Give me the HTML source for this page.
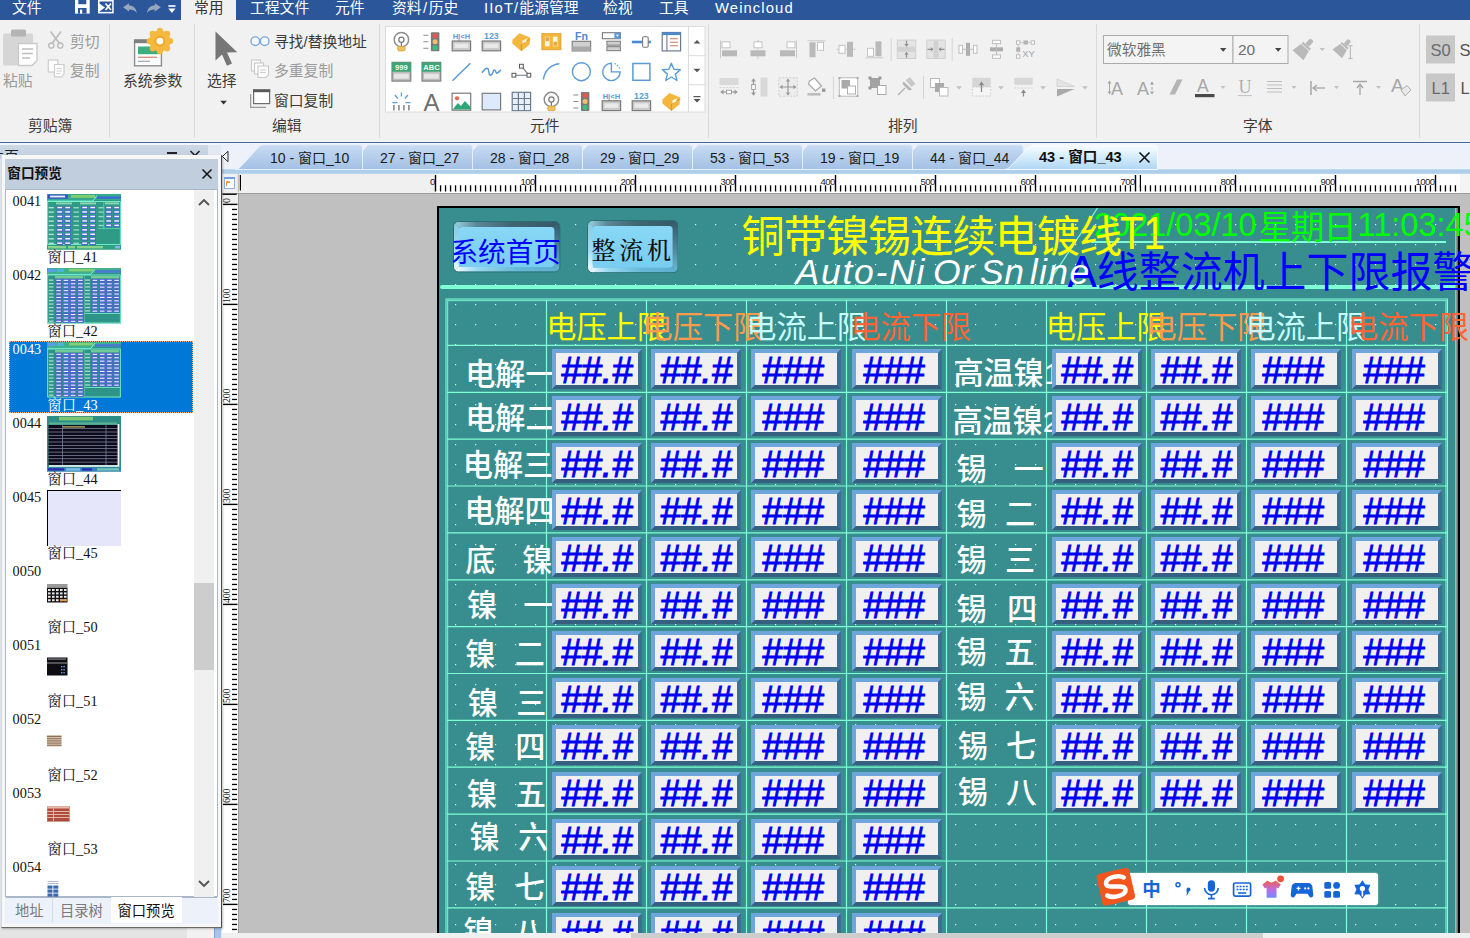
<!DOCTYPE html><html lang="zh-CN"><head><meta charset="utf-8"><title>EasyBuilder Pro</title><style>
*{box-sizing:border-box;margin:0;padding:0}
html,body{width:1470px;height:938px;overflow:hidden;background:#f1f1f1}
body{position:relative;font-family:"Liberation Sans","Noto Sans CJK SC",sans-serif;font-size:15px;color:#333}
.abs{position:absolute}
.t{position:absolute;white-space:nowrap;line-height:1}
#topbar{position:absolute;left:0;top:0;width:1470px;height:20.5px;background:#2b579a}
#topbar .t{color:#fff;font-size:14.8px;top:0.5px}
#ribbon{position:absolute;left:0;top:20px;width:1470px;height:121px;background:#f1f1f1}
.rt{position:absolute;white-space:nowrap;line-height:1;font-size:14.8px;color:#3b3b3b}
.rt.g{color:#9a9a9a}
.vdiv{position:absolute;top:4px;width:1px;height:114px;background:#dadada}
.serif{font-family:"Liberation Serif","Noto Serif CJK SC",serif}
#hmi{position:absolute;left:437px;top:205px;width:1023px;height:740px;background:#388e8e;overflow:visible}
.lab{position:absolute;white-space:nowrap;line-height:1;color:#fff;font-size:30.2px;letter-spacing:-0.1px;font-weight:500}
.hd{position:absolute;white-space:nowrap;line-height:1;font-size:30.2px}
.nb{position:absolute;width:90px;height:40px;background:#f0f0f0;border-style:solid;border-width:4px;border-color:#6ea6dc #3d6f93 #35607f #6ea6dc}
.nb span{position:absolute;left:0;right:0;top:-1.5px;text-align:center;color:#0000f0;font-style:italic;font-size:37px;line-height:37px;letter-spacing:0px;-webkit-text-stroke:0.9px #0000f0}
</style></head><body>
<div id="topbar">
<span class="t" style="left:12px">文件</span>
<span class="t" style="left:250px">工程文件</span>
<span class="t" style="left:335px">元件</span>
<span class="t" style="left:392px">资料<span style="letter-spacing:1.5px;margin-left:1.5px">/</span>历史</span>
<span class="t" style="left:484px"><span style="letter-spacing:1.15px">IIoT/</span>能源管理</span>
<span class="t" style="left:603px">检视</span>
<span class="t" style="left:659px">工具</span>
<span class="t" style="left:715px"><span style="letter-spacing:1.1px">Weincloud</span></span>
<div class="abs" style="left:181px;top:0;width:55px;height:20px;background:#f1f1f1"></div>
<span class="t" style="left:194px;color:#333">常用</span>
<svg class="abs" style="left:70px;top:0" width="110" height="20" viewBox="70 0 110 20"><path d="M75,0 H89.7 V13.6 H75Z" fill="#fff"/><rect x="78.3" y="0" width="8" height="4.2" fill="#2b579a"/><rect x="78" y="8" width="8.6" height="5.6" fill="#2b579a"/><rect x="80" y="9.6" width="2.2" height="4" fill="#fff"/><rect x="98" y="0" width="15.7" height="13.4" fill="#fff"/><rect x="99.5" y="1.5" width="12.7" height="10.4" fill="#2b579a"/><path d="M98,2.5 L105,7.5 L98,12.5Z" fill="#fff"/><path d="M105.5,3.5 l5.5,6.5 m0,-6.5 l-5.5,6.5" stroke="#fff" stroke-width="1.7"/><path d="M123,7.2 L129,3.2 V5.6 C133,5.6 136,8 136.9,13 C134.5,10.3 132.5,9.6 129,9.6 V11.6 Z" fill="#9aa6bd"/><path d="M160.8,7.2 L154.8,3.2 V5.6 C150.8,5.6 147.8,8 146.9,13 C149.3,10.3 151.3,9.6 154.8,9.6 V11.6 Z" fill="#9aa6bd"/><rect x="168.3" y="5.2" width="7.2" height="1.6" fill="#fff"/><path d="M168.3,8.6 h7.2 l-3.6,4.4z" fill="#fff"/></svg>
</div>
<div id="ribbon">
<div class="vdiv" style="left:109px"></div>
<div class="vdiv" style="left:194px"></div>
<div class="vdiv" style="left:379px"></div>
<div class="vdiv" style="left:708px"></div>
<div class="vdiv" style="left:1096px"></div>
<div class="vdiv" style="left:1419px"></div>
<span class="rt g" style="left:3px;top:54px">粘贴</span>
<span class="rt g" style="left:70px;top:15px">剪切</span>
<span class="rt g" style="left:70px;top:44px">复制</span>
<span class="rt " style="left:28px;top:99px">剪贴簿</span>
<span class="rt " style="left:123px;top:54px">系统参数</span>
<span class="rt " style="left:207px;top:54px">选择</span>
<span class="rt " style="left:274px;top:15px">寻找/替换地址</span>
<span class="rt g" style="left:274px;top:44px">多重复制</span>
<span class="rt " style="left:274px;top:73.7px">窗口复制</span>
<span class="rt " style="left:272px;top:99px">编辑</span>
<span class="rt " style="left:530px;top:99px">元件</span>
<span class="rt " style="left:888px;top:99px">排列</span>
<span class="rt " style="left:1243px;top:99px">字体</span>
<svg class="abs" style="left:0;top:-20px" width="1470" height="141" viewBox="0 0 1470 141" font-family="Liberation Sans, sans-serif"><rect x="385.5" y="26.5" width="319.5" height="85.5" fill="#fff" stroke="#dcdcdc" stroke-width="1"/><path d="M688.5,27 V112 M688.5,55.7 H705 M688.5,84.8 H705" stroke="#dcdcdc" stroke-width="1" fill="none"/><path d="M693.5,43.5 l3.5,-3.5 l3.5,3.5 z M693.5,68.8 l3.5,3.5 l3.5,-3.5 z M693.5,99 l3.5,3.5 l3.5,-3.5 z" fill="#555"/><rect x="693.5" y="96" width="7" height="1.2" fill="#555"/><clipPath id="galclip"><rect x="386" y="27" width="302" height="84.5"/></clipPath><g clip-path="url(#galclip)"><g transform="translate(391.4,31.7)"><circle cx="10" cy="8" r="7.2" fill="#fff" stroke="#8a8a8a" stroke-width="1.4"/><circle cx="10" cy="8" r="2.6" fill="none" stroke="#777" stroke-width="1.2"/><path d="M10,10.5 V15" stroke="#777" stroke-width="1.2"/><rect x="6.3" y="14.6" width="7.4" height="4.6" rx="1.4" fill="#f3c25a" stroke="#c99a3a" stroke-width=".7"/></g><g transform="translate(391.4,61.7)"><rect x="0.6" y="0.6" width="18.8" height="18.8" fill="#bdbdbd" stroke="#7a7a7a" stroke-width="1.1"/><rect x="0.6" y="0.6" width="18.8" height="9.4" fill="#3fa576"/><text x="10" y="8.2" font-size="7.6" font-weight="bold" fill="#e8fff2" text-anchor="middle">999</text><rect x="2.6" y="12" width="14.8" height="5" fill="#e6e6e6"/></g><g transform="translate(391.4,91.5)"><path d="M10,1 V5 M3.5,3.5 L6.5,7 M16.5,3.5 L13.5,7" stroke="#5b9bd5" stroke-width="1.3"/><path d="M1,11.2 h5 M14,11.2 h5" stroke="#5b9bd5" stroke-width="1.2"/><path d="M2.5,13.5 V19 M7.5,13.5 V19 M12.5,13.5 V19 M17.5,13.5 V19" stroke="#8a8a8a" stroke-width="1.6"/></g><g transform="translate(421.4,31.7)"><rect x="9.5" y="0.5" width="8.5" height="19" rx="1" fill="#7a7a7a"/><circle cx="13.7" cy="4" r="2.5" fill="#e8574f"/><circle cx="13.7" cy="10" r="2.5" fill="#f0c070"/><circle cx="13.7" cy="16" r="2.5" fill="#34c47c"/><path d="M2,3.5 h5 M2,10 h5 M2,16.5 h5" stroke="#8a8a8a" stroke-width="1.1"/></g><g transform="translate(421.4,61.7)"><rect x="0.6" y="0.6" width="18.8" height="18.8" fill="#bdbdbd" stroke="#7a7a7a" stroke-width="1.1"/><rect x="0.6" y="0.6" width="18.8" height="9.4" fill="#3fa576"/><text x="10" y="8.2" font-size="7.6" font-weight="bold" fill="#e8fff2" text-anchor="middle">ABC</text><rect x="2.6" y="12" width="14.8" height="5" fill="#e6e6e6"/></g><g transform="translate(421.4,91.5)"><text x="10" y="19" font-size="24" fill="#6e6e6e" text-anchor="middle">A</text></g><g transform="translate(451.4,31.7)"><text x="10" y="7.6" font-size="7.6" font-weight="bold" fill="#5b9bd5" text-anchor="middle">H|&lt;H</text><rect x="0.8" y="9.3" width="18.4" height="9.8" fill="#c9c9c9" stroke="#7a7a7a" stroke-width="1.2"/><rect x="3" y="11.8" width="14" height="4.6" fill="#e9e9e9"/></g><g transform="translate(451.4,61.7)"><path d="M1,19 L19,1.5" stroke="#5b9bd5" stroke-width="1.5"/></g><g transform="translate(451.4,91.5)"><rect x="0.7" y="1.7" width="18.6" height="17" fill="#fff" stroke="#7a7a7a" stroke-width="1.2"/><circle cx="5.6" cy="6.8" r="2.1" fill="#e8674f"/><path d="M1.3,18 L6.5,11.5 L9.5,14.5 L13.5,9.5 L18.7,15 V18.1 H1.3Z" fill="#2fa67a"/></g><g transform="translate(481.4,31.7)"><text x="10" y="7.6" font-size="8.8" font-weight="bold" fill="#5b9bd5" text-anchor="middle">123</text><rect x="0.8" y="9.3" width="18.4" height="9.8" fill="#c9c9c9" stroke="#7a7a7a" stroke-width="1.2"/><rect x="3" y="11.8" width="14" height="4.6" fill="#e9e9e9"/></g><g transform="translate(481.4,61.7)"><path d="M0.5,11 C3,8 5,5.5 6.5,7 C8,9 7,14 9.5,13.5 C12,12.5 11.5,7 13.5,8.5 C15,10 14.5,12.5 16.5,11 C18,10 18.5,9 19.5,8" stroke="#5b9bd5" stroke-width="1.5" fill="none"/></g><g transform="translate(481.4,91.5)"><rect x="0.8" y="1.8" width="18.4" height="16.6" fill="#ddeafc" stroke="#7a7a7a" stroke-width="1.2"/></g><g transform="translate(511.4,31.7)"><path d="M1,8 L8,1.5 L19,6 L18,13 L10,19.5 L1,12 Z" fill="#f4b73e"/><path d="M10,13 L18,7.5 M10,13 V19" stroke="#d3952a" stroke-width="1"/><path d="M11,9 l5,-2.6 l-1.2,3.6 l-4,2z" fill="#fff3d6"/></g><g transform="translate(511.4,61.7)"><path d="M2.5,13.5 H17.5 L10,4.5" stroke="#6a7a8a" stroke-width="1.1" fill="none"/><rect x="0.6" y="11.6" width="3.8" height="3.8" fill="#fff" stroke="#555" stroke-width="1"/><rect x="15.6" y="11.6" width="3.8" height="3.8" fill="#fff" stroke="#555" stroke-width="1"/><rect x="8.1" y="2.6" width="3.8" height="3.8" fill="#fff" stroke="#555" stroke-width="1"/></g><g transform="translate(511.4,91.5)"><rect x="0.8" y="0.8" width="18.4" height="18.4" fill="#e6effb" stroke="#6a7a8a" stroke-width="1.2"/><path d="M7,1 V19 M13,1 V19 M1,7 H19 M1,13 H19" stroke="#6a7a8a" stroke-width="1.2"/></g><g transform="translate(541.4,31.7)"><rect x="0.5" y="2" width="19" height="16" fill="#f4b73e" stroke="#e0a22e" stroke-width="1"/><rect x="3.5" y="5" width="4.6" height="9.6" fill="#fff6e0"/><rect x="11.5" y="5" width="4.6" height="9.6" fill="#fff6e0"/><rect x="4" y="5.5" width="3.6" height="4" fill="#e8a84a"/><rect x="12" y="10" width="3.6" height="4" fill="#e8a84a"/></g><g transform="translate(541.4,61.7)"><path d="M2,18 C3,9 9,3 18,2" stroke="#5b9bd5" stroke-width="1.5" fill="none"/></g><g transform="translate(541.4,91.5)"><circle cx="10" cy="8" r="7.2" fill="#fff" stroke="#8a8a8a" stroke-width="1.4"/><circle cx="10" cy="8" r="2.6" fill="none" stroke="#777" stroke-width="1.2"/><path d="M10,10.5 V15" stroke="#777" stroke-width="1.2"/><rect x="6.3" y="14.6" width="7.4" height="4.6" rx="1.4" fill="#f3c25a" stroke="#c99a3a" stroke-width=".7"/></g><g transform="translate(571.4,31.7)"><text x="10" y="8.6" font-size="10.5" font-weight="bold" fill="#4a8ad4" text-anchor="middle">Fn</text><rect x="0.8" y="9.6" width="18.4" height="9.6" fill="#cfcfcf" stroke="#808080" stroke-width="1.2"/><rect x="0.8" y="14.8" width="18.4" height="4.4" fill="#a9a9a9"/></g><g transform="translate(571.4,61.7)"><circle cx="10" cy="10" r="9" stroke="#5b9bd5" stroke-width="1.4" fill="none"/></g><g transform="translate(571.4,91.5)"><rect x="9.5" y="0.5" width="8.5" height="19" rx="1" fill="#7a7a7a"/><circle cx="13.7" cy="4" r="2.5" fill="#e8574f"/><circle cx="13.7" cy="10" r="2.5" fill="#f0c070"/><circle cx="13.7" cy="16" r="2.5" fill="#34c47c"/><path d="M2,3.5 h5 M2,10 h5 M2,16.5 h5" stroke="#8a8a8a" stroke-width="1.1"/></g><g transform="translate(601.4,31.7)"><rect x="1" y="1" width="18" height="6" fill="#fff" stroke="#7a7a7a" stroke-width="1.1"/><rect x="13" y="1" width="6" height="6" fill="#5b9bd5"/><path d="M14.5,3 l1.5,2 l1.5,-2z" fill="#fff"/><rect x="5.5" y="9.5" width="13.5" height="4" fill="#cfcfcf" stroke="#7a7a7a" stroke-width="1"/><rect x="5.5" y="15" width="13.5" height="4" fill="#cfcfcf" stroke="#7a7a7a" stroke-width="1"/></g><g transform="translate(601.4,61.7)"><path d="M10,1.5 A8.7,8.7 0 1 0 18.7,10.2 H10 Z" stroke="#5b9bd5" stroke-width="1.4" fill="none"/><path d="M13,1.8 A8.7,8.7 0 0 1 18.3,7" stroke="#5b9bd5" stroke-width="1.2" stroke-dasharray="1.5 1.5" fill="none"/></g><g transform="translate(601.4,91.5)"><text x="10" y="7.6" font-size="7.6" font-weight="bold" fill="#5b9bd5" text-anchor="middle">H|&lt;H</text><rect x="0.8" y="9.3" width="18.4" height="9.8" fill="#c9c9c9" stroke="#7a7a7a" stroke-width="1.2"/><rect x="3" y="11.8" width="14" height="4.6" fill="#e9e9e9"/></g><g transform="translate(631.4,31.7)"><rect x="0.5" y="9" width="19" height="2.6" fill="#4a8ad4"/><rect x="11.2" y="5" width="5.6" height="10.6" rx="1.2" fill="#fff" stroke="#7a7a7a" stroke-width="1.1"/></g><g transform="translate(631.4,61.7)"><rect x="1.5" y="1.8" width="17" height="16.8" stroke="#5b9bd5" stroke-width="1.5" fill="none"/></g><g transform="translate(631.4,91.5)"><text x="10" y="7.6" font-size="8.8" font-weight="bold" fill="#5b9bd5" text-anchor="middle">123</text><rect x="0.8" y="9.3" width="18.4" height="9.8" fill="#c9c9c9" stroke="#7a7a7a" stroke-width="1.2"/><rect x="3" y="11.8" width="14" height="4.6" fill="#e9e9e9"/></g><g transform="translate(661.4,31.7)"><rect x="0.8" y="0.8" width="18.4" height="18.4" fill="#fff" stroke="#6a7a90" stroke-width="1.2"/><rect x="0.8" y="0.8" width="18.4" height="2.6" fill="#4a8ad4"/><path d="M5.5,3 V19" stroke="#6a7a90" stroke-width="1.1"/><path d="M8.5,7 h8 M8.5,10.5 h8 M8.5,14 h8" stroke="#c27a5a" stroke-width="1.1"/></g><g transform="translate(661.4,61.7)"><path d="M10,1.5 L12.5,7.6 L19,8.1 L14,12.4 L15.6,18.8 L10,15.3 L4.4,18.8 L6,12.4 L1,8.1 L7.5,7.6 Z" stroke="#5b9bd5" stroke-width="1.4" fill="none" stroke-linejoin="round"/></g><g transform="translate(661.4,91.5)"><path d="M1,8 L8,1.5 L19,6 L18,13 L10,19.5 L1,12 Z" fill="#f4b73e"/><path d="M10,13 L18,7.5 M10,13 V19" stroke="#d3952a" stroke-width="1"/><path d="M11,9 l5,-2.6 l-1.2,3.6 l-4,2z" fill="#fff3d6"/></g></g><rect x="3" y="33.5" width="30" height="32" rx="1.5" fill="#d6d6d6"/><rect x="11" y="29.5" width="15" height="7" rx="1.5" fill="#b4b4b4"/><path d="M18.5,43.5 H37 V60.5 L32,65.5 H18.5 Z" fill="#fff" stroke="#c9c9c9" stroke-width="1.3"/><path d="M22,49 h11 M22,53.5 h11 M22,58 h8" stroke="#bdbdbd" stroke-width="1.5"/><path d="M50.5,31.5 L59.5,43.5 M61,31.5 L52,43.5" stroke="#bcbcbc" stroke-width="1.7" fill="none"/><circle cx="51.3" cy="45.6" r="2.6" fill="none" stroke="#bcbcbc" stroke-width="1.4"/><circle cx="60.3" cy="45.6" r="2.6" fill="none" stroke="#bcbcbc" stroke-width="1.4"/><rect x="48.3" y="60" width="9.5" height="12" fill="#fff" stroke="#cdcdcd" stroke-width="1.2"/><path d="M54.5,64.5 H64 V74 L61.5,76.8 H54.5Z" fill="#fff" stroke="#cdcdcd" stroke-width="1.2"/><path d="M56.5,68.5 h5.5 M56.5,71 h5.5 M56.5,73.5 h4" stroke="#cfcfcf" stroke-width="1"/><rect x="134.6" y="40.2" width="26.8" height="25.6" fill="#fff" stroke="#8d8d8d" stroke-width="1.4"/><rect x="134" y="39.4" width="28" height="3.8" fill="#7f7f7f"/><rect x="138" y="46.5" width="20.5" height="7.7" fill="#3fae7e"/><path d="M138,57.3 h19" stroke="#d98a7a" stroke-width="1.3"/><path d="M138,61.3 h12" stroke="#a9a9a9" stroke-width="1.3"/><circle cx="159.9" cy="41.1" r="10.6" fill="#f5b940"/><circle cx="170.1" cy="41.1" r="3.1" fill="#f5b940"/><circle cx="167.1" cy="48.3" r="3.1" fill="#f5b940"/><circle cx="159.9" cy="51.3" r="3.1" fill="#f5b940"/><circle cx="152.7" cy="48.3" r="3.1" fill="#f5b940"/><circle cx="149.7" cy="41.1" r="3.1" fill="#f5b940"/><circle cx="152.7" cy="33.9" r="3.1" fill="#f5b940"/><circle cx="159.9" cy="30.9" r="3.1" fill="#f5b940"/><circle cx="167.1" cy="33.9" r="3.1" fill="#f5b940"/><circle cx="159.9" cy="41.1" r="5.6" fill="#f0a928"/><circle cx="159.9" cy="41.1" r="3.4" fill="#fdfdfd"/><path d="M215.5,31.5 L215.5,60.5 L222,54.5 L227,65.8 L232,63.5 L227,52.5 L237.3,52.2 Z" fill="#767676"/><path d="M220.3,100.8 h6.6 l-3.3,3.6z" fill="#333"/><circle cx="255.3" cy="41.2" r="4.3" fill="#f4f8fd" stroke="#7da7d9" stroke-width="1.4"/><circle cx="264.7" cy="41.2" r="4.3" fill="#f4f8fd" stroke="#7da7d9" stroke-width="1.4"/><rect x="251.5" y="60" width="9" height="11" fill="#fbfbfb" stroke="#c9c9c9" stroke-width="1.1"/><rect x="254.5" y="63" width="9" height="11" fill="#fbfbfb" stroke="#c9c9c9" stroke-width="1.1"/><path d="M258,66 H268.5 V75 L266,77.5 H258Z" fill="#fbfbfb" stroke="#c9c9c9" stroke-width="1.1"/><path d="M260,70 h6 M260,72.5 h6" stroke="#cfcfcf" stroke-width="1"/><path d="M250.6,94 V107.3 H266" stroke="#9a9a9a" stroke-width="1.2" fill="none"/><rect x="253.6" y="90" width="16" height="13.6" fill="#fff" stroke="#6e6e6e" stroke-width="1.2"/><rect x="253" y="89.4" width="17.2" height="2.8" fill="#5a5a5a"/><g transform="translate(719.0,39.3)"><path d="M1.5,1 V19" stroke="#c9c9c9" stroke-width="1"/><rect x="3" y="2.5" width="8" height="6" fill="#fff" stroke="#c2c2c2" stroke-width="1"/><rect x="3" y="11" width="15" height="6" fill="#b9b9b9"/></g><g transform="translate(748.0,39.3)"><path d="M10,0.5 V19.5" stroke="#c9c9c9" stroke-width="1"/><rect x="6" y="2.5" width="8" height="6" fill="#fff" stroke="#c2c2c2" stroke-width="1"/><rect x="2.5" y="11" width="15" height="6" fill="#b9b9b9"/></g><g transform="translate(778.0,39.3)"><path d="M18.5,1 V19" stroke="#c9c9c9" stroke-width="1"/><rect x="9" y="2.5" width="8" height="6" fill="#fff" stroke="#c2c2c2" stroke-width="1"/><rect x="2" y="11" width="15" height="6" fill="#b9b9b9"/></g><g transform="translate(806.5,39.3)"><path d="M1,1.5 H19" stroke="#c9c9c9" stroke-width="1"/><rect x="3" y="3" width="6" height="15" fill="#b9b9b9"/><rect x="11" y="3" width="6" height="8" fill="#fff" stroke="#c2c2c2" stroke-width="1"/></g><g transform="translate(836.0,39.3)"><path d="M0.5,10 H19.5" stroke="#c9c9c9" stroke-width="1"/><rect x="3" y="6" width="6" height="8" fill="#fff" stroke="#c2c2c2" stroke-width="1"/><rect x="11" y="2.5" width="6" height="15" fill="#b9b9b9"/></g><g transform="translate(864.5,39.3)"><path d="M1,18.5 H19" stroke="#c9c9c9" stroke-width="1"/><rect x="3" y="9" width="6" height="8" fill="#fff" stroke="#c2c2c2" stroke-width="1"/><rect x="11" y="2" width="6" height="15" fill="#b9b9b9"/></g><g transform="translate(896.5,39.3)"><rect x="0.8" y="0.8" width="18.4" height="18.4" fill="#e4e4e4" stroke="#cfcfcf" stroke-width="1"/><rect x="1.5" y="7.5" width="17" height="5" fill="#d2d2d2"/><path d="M10,1.5 V7 M10,18.5 V13" stroke="#8f8f8f" stroke-width="1.2"/><path d="M7.8,4.8 l2.2,2.6 l2.2,-2.6z M7.8,15.2 l2.2,-2.6 l2.2,2.6z" fill="#8f8f8f"/></g><g transform="translate(926.0,39.3)"><rect x="0.8" y="0.8" width="18.4" height="18.4" fill="#e4e4e4" stroke="#cfcfcf" stroke-width="1"/><rect x="7.5" y="1.5" width="5" height="17" fill="#d2d2d2"/><path d="M1.5,10 H7 M18.5,10 H13" stroke="#8f8f8f" stroke-width="1.2"/><path d="M4.8,7.8 l2.6,2.2 l-2.6,2.2z M15.2,7.8 l-2.6,2.2 l2.6,2.2z" fill="#8f8f8f"/></g><g transform="translate(958.0,39.3)"><rect x="1" y="6" width="3.4" height="8" fill="#fff" stroke="#bdbdbd" stroke-width="1"/><rect x="8" y="3.5" width="4" height="13" fill="#adadad"/><rect x="15.6" y="6" width="3.4" height="8" fill="#fff" stroke="#bdbdbd" stroke-width="1"/><path d="M4.4,10 H15.6" stroke="#bdbdbd" stroke-width="1"/></g><g transform="translate(986.5,39.3)"><rect x="6" y="1" width="8" height="3.4" fill="#fff" stroke="#bdbdbd" stroke-width="1"/><rect x="3.5" y="8" width="13" height="4" fill="#adadad"/><rect x="6" y="15.6" width="8" height="3.4" fill="#fff" stroke="#bdbdbd" stroke-width="1"/><path d="M10,4.4 V15.6" stroke="#bdbdbd" stroke-width="1"/></g><g transform="translate(1015.5,39.8)"><rect x="1" y="1" width="3.4" height="3.4" fill="#fff" stroke="#b4b4b4" stroke-width=".9"/><rect x="8" y="0.8" width="4.5" height="3.8" fill="#a9a9a9"/><rect x="15.6" y="1" width="3.4" height="3.4" fill="#fff" stroke="#b4b4b4" stroke-width=".9"/><rect x="0.8" y="7.5" width="3.8" height="4.4" fill="#a9a9a9"/><rect x="1" y="15" width="3.4" height="3.4" fill="#fff" stroke="#b4b4b4" stroke-width=".9"/><path d="M4.4,2.7 H15.6 M2.7,4.4 V15" stroke="#c4c4c4" stroke-width=".8"/><text x="13" y="17.5" font-size="9.5" fill="#a6a6a6" text-anchor="middle">XY</text></g><g transform="translate(719.0,77.0)"><rect x="0.5" y="1" width="19" height="7" fill="#d9d9d9"/><path d="M0.5,10.5 H19.5" stroke="#d2d2d2" stroke-width="1" stroke-dasharray="2 1.4"/><path d="M2,15 H18" stroke="#9a9a9a" stroke-width="1.2"/><path d="M4.5,12.6 L1.2,15 L4.5,17.4z M15.5,12.6 L18.8,15 L15.5,17.4z" fill="#9a9a9a"/><rect x="7.5" y="13.2" width="5" height="3.6" fill="#fff" stroke="#9a9a9a" stroke-width=".9"/></g><g transform="translate(748.5,77.0)"><rect x="12" y="0.5" width="7" height="19" fill="#d9d9d9"/><path d="M5,2 V18" stroke="#9a9a9a" stroke-width="1.2"/><path d="M2.6,4.5 L5,1.2 L7.4,4.5z M2.6,15.5 L5,18.8 L7.4,15.5z" fill="#9a9a9a"/><rect x="3.2" y="7.5" width="3.6" height="5" fill="#fff" stroke="#9a9a9a" stroke-width=".9"/></g><g transform="translate(778.0,77.0)"><rect x="0.8" y="0.8" width="18.4" height="18.4" fill="#ededed" stroke="#cdcdcd" stroke-width="1" stroke-dasharray="2 1.5"/><path d="M10,2.5 V17.5 M2.5,10 H17.5" stroke="#9a9a9a" stroke-width="1.2"/><path d="M7.8,4.6 L10,1.6 L12.2,4.6z M7.8,15.4 L10,18.4 L12.2,15.4z M4.6,7.8 L1.6,10 L4.6,12.2z M15.4,7.8 L18.4,10 L15.4,12.2z" fill="#9a9a9a"/></g><g transform="translate(806.5,77.0)"><path d="M3,4 L8,1 L15,9 L9,14 L2,7Z" fill="#fff" stroke="#a9a9a9" stroke-width="1.2"/><rect x="1" y="16" width="13" height="2.6" fill="#bdbdbd"/><rect x="15.5" y="11.5" width="3.4" height="3.4" fill="#9a9a9a"/></g><g transform="translate(838.5,77.0)"><rect x="0.8" y="0.8" width="18.4" height="18.4" fill="#fff" stroke="#b9b9b9" stroke-width="1"/><rect x="3" y="3" width="8.5" height="8.5" fill="#a9a9a9"/><rect x="9" y="9" width="8" height="8" fill="#fff" stroke="#b0b0b0" stroke-width="1"/><path d="M0,0 h2 v2 h-2z M18,0 h2 v2 h-2z M0,18 h2 v2 h-2z M18,18 h2 v2 h-2z" fill="#a9a9a9"/></g><g transform="translate(867.5,76.5)"><rect x="2.5" y="1.5" width="10" height="10" fill="#a3a3a3"/><rect x="10" y="9" width="8.5" height="9" fill="#fff" stroke="#a9a9a9" stroke-width="1"/><path d="M1,0 h3 v3 h-3z M11,0 h3 v3 h-3z M1,10 h3 v3 h-3z" fill="#9a9a9a"/></g><g transform="translate(896.5,76.5)"><path d="M9,3.5 L13.5,0.8 L19,7.5 L15,10.5 Z" fill="#c9c9c9"/><path d="M7,5 L15.5,13 L12.5,14 L6,7.5Z" fill="#b4b4b4"/><path d="M8.5,11.5 L1.5,18.5" stroke="#b4b4b4" stroke-width="1.5"/></g><g transform="translate(929.5,77.5)"><rect x="1" y="1" width="9" height="9" fill="#fff" stroke="#b9b9b9" stroke-width="1"/><rect x="5.5" y="5.5" width="9" height="9" fill="#a9a9a9"/><rect x="10" y="10" width="8.5" height="8.5" fill="#fff" stroke="#b9b9b9" stroke-width="1"/></g><g transform="translate(971.5,77.0)"><rect x="0.8" y="0.8" width="18.4" height="9.2" fill="#d6d6d6"/><rect x="0.8" y="10" width="18.4" height="9" fill="#f5f5f5" stroke="#cdcdcd" stroke-width=".9" stroke-dasharray="2 1.4"/><path d="M10,15 V6" stroke="#8a8a8a" stroke-width="1.3"/><path d="M7.4,8.2 L10,4.6 L12.6,8.2z" fill="#8a8a8a"/></g><g transform="translate(1013.5,77.0)"><rect x="0.8" y="0.8" width="18.4" height="7" fill="#d6d6d6"/><path d="M0.8,11 H19.2" stroke="#cdcdcd" stroke-width="1" stroke-dasharray="2 1.4"/><path d="M10,19.5 V14" stroke="#8a8a8a" stroke-width="1.3"/><path d="M7.4,16 L10,12.5 L12.6,16z" fill="#8a8a8a"/></g><g transform="translate(1056.0,77.5)"><path d="M1,1.5 L18.5,9 H1Z" fill="#e4e4e4" stroke="#cfcfcf" stroke-width=".8"/><path d="M1,19 L18.5,11.5 H1Z" fill="#a9a9a9"/></g><path d="M891.2,38 V61 M952.2,38 V61 M833.4,76 V99 M923.5,76 V99" stroke="#d4d4d4" stroke-width="1"/><path d="M956,86.2 h6 l-3,3.4z" fill="#c2c2c2"/><path d="M998,86.2 h6 l-3,3.4z" fill="#c2c2c2"/><path d="M1040,86.2 h6 l-3,3.4z" fill="#c2c2c2"/><path d="M1082,86.2 h6 l-3,3.4z" fill="#c2c2c2"/><rect x="1103.5" y="35.5" width="129.5" height="28" fill="#f4f4f4" stroke="#ababab" stroke-width="1"/><rect x="1233" y="35.5" width="55" height="28" fill="#f4f4f4" stroke="#ababab" stroke-width="1"/><path d="M1220,48 h6.4 l-3.2,3.8z M1275,48 h6.4 l-3.2,3.8z" fill="#444"/><g fill="#b9b9b9"><g transform="translate(1304,48.6) rotate(42)"><rect x="-2.4" y="-12" width="4.8" height="7.5" rx="1.6"/><rect x="-5.2" y="-4.6" width="10.4" height="2.4"/><path d="M-5.2,-1.4 H5.2 L7.4,9 H-7.4Z"/></g><path d="M1319.5,48 h5.4 l-2.7,3.2z" fill="#c2c2c2"/><g transform="translate(1342.6,48) rotate(42) scale(0.88)"><rect x="-2.4" y="-12" width="4.8" height="7.5" rx="1.6"/><rect x="-5.2" y="-4.6" width="10.4" height="2.4"/><path d="M-5.2,-1.4 H5.2 L7.4,9 H-7.4Z"/></g><path d="M1348.2,45.8 h4.4 M1350.4,45.8 V58.6 M1348.2,58.6 h4.4" stroke="#b4b4b4" stroke-width="1" fill="none"/></g><g fill="#a6a6a6" font-size="17"><text x="1111" y="94.5" font-size="18">A</text><path d="M1109.5,81 v13" stroke="#a6a6a6" stroke-width="1"/><path d="M1107.5,83.5 l2,-3 l2,3z M1107.5,91.5 l2,3 l2,-3z"/><text x="1137" y="94.5" font-size="18">A</text><path d="M1152,82 v12" stroke="#a6a6a6" stroke-width="1" stroke-dasharray="3 2"/><path d="M1150,84.5 l2,-3 l2,3z M1150,91.5 l2,3 l2,-3z"/><path d="M1177,79.5 h5.5 l-7.5,15 h-5.5z" fill="#b4b4b4"/><text x="1197" y="92" font-size="17.5">A</text><rect x="1195" y="94" width="19.5" height="3.2" fill="#4a4a4a"/><path d="M1220.5,86 h5 l-2.5,3z" fill="#c2c2c2"/><text x="1238.5" y="93" font-size="18" font-family="Liberation Serif, serif" fill="#b0b0b0">U</text><path d="M1238,95.6 h14" stroke="#c2c2c2" stroke-width="1"/><path d="M1267,81.5 h15 M1267,85 h15 M1267,88.5 h15 M1267,92 h15" stroke="#bdbdbd" stroke-width="1.1"/><path d="M1291.5,86 h5 l-2.5,3z" fill="#c2c2c2"/><path d="M1311,81 V95" stroke="#a6a6a6" stroke-width="1.5"/><path d="M1313,88 H1325" stroke="#a6a6a6" stroke-width="1.3"/><path d="M1317,85 L1313,88 L1317,91" stroke="#a6a6a6" stroke-width="1.3" fill="none"/><path d="M1334,86 h5 l-2.5,3z" fill="#c2c2c2"/><path d="M1353,81.5 H1367" stroke="#a6a6a6" stroke-width="1.5"/><path d="M1360,84 V95" stroke="#a6a6a6" stroke-width="1.3"/><path d="M1357,88 L1360,84 L1363,88" stroke="#a6a6a6" stroke-width="1.3" fill="none"/><path d="M1376,86 h5 l-2.5,3z" fill="#c2c2c2"/><text x="1391" y="92" font-size="19" fill="#a6a6a6">A</text><path d="M1401,90 l6,-4.5 l4,4.5 l-6,6z" fill="#e9e9e9" stroke="#b0b0b0" stroke-width="1"/></g><rect x="1426" y="35.5" width="29" height="28" fill="#c8c8c8"/><rect x="1426" y="73.5" width="29" height="28" fill="#c8c8c8"/><g font-size="16.5" fill="#6a6a6a"><text x="1430.5" y="55.5">S0</text><text x="1431.5" y="93.5">L1</text><text x="1459.5" y="55.5" fill="#555">S</text><text x="1460.5" y="93.5" fill="#555">L</text></g><g font-size="15" fill="#6f6f6f"><text x="1238" y="55" font-size="15.5">20</text></g></svg>
<span class="rt" style="left:1107px;top:22.5px;color:#6f6f6f;font-size:14.7px">微软雅黑</span>
</div>
<div class="abs" style="left:0;top:140.6px;width:1470px;height:1.2px;background:#f6f7fa"></div>
<div class="abs" style="left:0;top:141.7px;width:1470px;height:1.3px;background:#46649a"></div>
<div class="abs" style="left:0;top:143px;width:1470px;height:795px;background:#dfe7f3"></div>
<div class="abs" style="left:239px;top:193px;width:1231px;height:740px;background:#c0c0c0"></div>
<div class="abs" style="left:0;top:143px;width:1470px;height:1.5px;background:#f1f4fb"></div>
<div class="abs" style="left:220px;top:144px;width:1250px;height:26px;background:linear-gradient(180deg,#ecf0fa,#eff2fb)"></div>
<svg class="abs" style="left:220px;top:143px" width="1250" height="31"><defs><linearGradient id="tg" x1="0" y1="0" x2="0" y2="1"><stop offset="0" stop-color="#c8dcf3"/><stop offset="1" stop-color="#a3c0e4"/></linearGradient><linearGradient id="ta" x1="0" y1="0" x2="0" y2="1"><stop offset="0" stop-color="#fafdff"/><stop offset="0.5" stop-color="#d4ecfb"/><stop offset="1" stop-color="#afd6f4"/></linearGradient></defs><rect x="0" y="26.3" width="1250" height="4.4" fill="#aecfe9"/><path d="M15,26.5 Q18,26.5 20,24.5 L38,4.8 Q40,1.8 44,1.8 L139.5,1.8 Q142.5,1.8 142.5,4.8 L142.5,26.5 Z" fill="url(#tg)" stroke="#e6eefa" stroke-width="1"/><path d="M142.5,26.5 L142.5,7.8 L148.0,1.8 L249.5,1.8 Q252.5,1.8 252.5,4.8 L252.5,26.5 Z" fill="url(#tg)" stroke="#e6eefa" stroke-width="1"/><path d="M252.5,26.5 L252.5,7.8 L258.0,1.8 L359.5,1.8 Q362.5,1.8 362.5,4.8 L362.5,26.5 Z" fill="url(#tg)" stroke="#e6eefa" stroke-width="1"/><path d="M362.5,26.5 L362.5,7.8 L368.0,1.8 L469.5,1.8 Q472.5,1.8 472.5,4.8 L472.5,26.5 Z" fill="url(#tg)" stroke="#e6eefa" stroke-width="1"/><path d="M472.5,26.5 L472.5,7.8 L478.0,1.8 L579.5,1.8 Q582.5,1.8 582.5,4.8 L582.5,26.5 Z" fill="url(#tg)" stroke="#e6eefa" stroke-width="1"/><path d="M582.5,26.5 L582.5,7.8 L588.0,1.8 L689.5,1.8 Q692.5,1.8 692.5,4.8 L692.5,26.5 Z" fill="url(#tg)" stroke="#e6eefa" stroke-width="1"/><path d="M692.5,26.5 L692.5,7.8 L698.0,1.8 L800.3,1.8 Q803.3,1.8 803.3,4.8 L803.3,26.5 Z" fill="url(#tg)" stroke="#e6eefa" stroke-width="1"/><path d="M784.5,26.5 Q787.5,26.5 789.5,24.5 L808,4.8 Q810,1.8 814,1.8 L934.5,1.8 Q937.5,1.8 937.5,4.8 L937.5,26.5 Z" fill="url(#ta)" stroke="#f4f9fe" stroke-width="1"/><path d="M919.5,9.5 l10,10 m0,-10 l-10,10" stroke="#111" stroke-width="1.6" fill="none"/><path d="M8,8.3 l-5.6,5.2 l5.6,5.2 z" stroke="#222" stroke-width="1" fill="#fff"/></svg>
<span class="t" style="left:270px;top:150.5px;font-size:14px;color:#1b1b1b">10 - 窗口_10</span>
<span class="t" style="left:380px;top:150.5px;font-size:14px;color:#1b1b1b">27 - 窗口_27</span>
<span class="t" style="left:490px;top:150.5px;font-size:14px;color:#1b1b1b">28 - 窗口_28</span>
<span class="t" style="left:600px;top:150.5px;font-size:14px;color:#1b1b1b">29 - 窗口_29</span>
<span class="t" style="left:710px;top:150.5px;font-size:14px;color:#1b1b1b">53 - 窗口_53</span>
<span class="t" style="left:820px;top:150.5px;font-size:14px;color:#1b1b1b">19 - 窗口_19</span>
<span class="t" style="left:930px;top:150.5px;font-size:14px;color:#1b1b1b">44 - 窗口_44</span>
<span class="t" style="left:1039px;top:150px;font-size:14.6px;font-weight:bold;color:#111">43 - 窗口_43</span>
<div class="abs" style="left:222px;top:173.5px;width:1248px;height:19px;background:#f0f0f0"></div>
<div class="abs" style="left:435.5px;top:173.5px;width:1024px;height:19px;background:#ffffff"></div>
<div class="abs" style="left:1459.5px;top:173.5px;width:11px;height:19px;background:#f4f4f4"></div>
<div class="abs" style="left:222px;top:192.5px;width:1248px;height:1.5px;background:#9d9d9d"></div>
<div class="abs" style="left:222px;top:194px;width:16.5px;height:740px;background:#f0f0f0"></div>
<div class="abs" style="left:222px;top:204.5px;width:16.5px;height:730px;background:#ffffff"></div>
<div class="abs" style="left:238.3px;top:193px;width:1.2px;height:741px;background:#9d9d9d"></div>
<svg class="abs" style="left:0;top:0" width="1470" height="938"><rect x="434.8" y="175" width="1.4" height="16.5" fill="#000"/><rect x="439.9" y="185.3" width="1.3" height="6.2" fill="#000"/><rect x="444.9" y="185.3" width="1.3" height="6.2" fill="#000"/><rect x="449.9" y="185.3" width="1.3" height="6.2" fill="#000"/><rect x="454.9" y="185.3" width="1.3" height="6.2" fill="#000"/><rect x="459.9" y="185.3" width="1.3" height="6.2" fill="#000"/><rect x="464.9" y="185.3" width="1.3" height="6.2" fill="#000"/><rect x="469.9" y="185.3" width="1.3" height="6.2" fill="#000"/><rect x="474.9" y="185.3" width="1.3" height="6.2" fill="#000"/><rect x="479.9" y="185.3" width="1.3" height="6.2" fill="#000"/><rect x="484.9" y="185.3" width="1.3" height="6.2" fill="#000"/><rect x="489.9" y="185.3" width="1.3" height="6.2" fill="#000"/><rect x="494.9" y="185.3" width="1.3" height="6.2" fill="#000"/><rect x="499.9" y="185.3" width="1.3" height="6.2" fill="#000"/><rect x="504.9" y="185.3" width="1.3" height="6.2" fill="#000"/><rect x="509.9" y="185.3" width="1.3" height="6.2" fill="#000"/><rect x="514.9" y="185.3" width="1.3" height="6.2" fill="#000"/><rect x="519.9" y="185.3" width="1.3" height="6.2" fill="#000"/><rect x="524.9" y="185.3" width="1.3" height="6.2" fill="#000"/><rect x="529.9" y="185.3" width="1.3" height="6.2" fill="#000"/><rect x="534.8" y="175" width="1.4" height="16.5" fill="#000"/><rect x="539.9" y="185.3" width="1.3" height="6.2" fill="#000"/><rect x="544.9" y="185.3" width="1.3" height="6.2" fill="#000"/><rect x="549.9" y="185.3" width="1.3" height="6.2" fill="#000"/><rect x="554.9" y="185.3" width="1.3" height="6.2" fill="#000"/><rect x="559.9" y="185.3" width="1.3" height="6.2" fill="#000"/><rect x="564.9" y="185.3" width="1.3" height="6.2" fill="#000"/><rect x="569.9" y="185.3" width="1.3" height="6.2" fill="#000"/><rect x="574.9" y="185.3" width="1.3" height="6.2" fill="#000"/><rect x="579.9" y="185.3" width="1.3" height="6.2" fill="#000"/><rect x="584.9" y="185.3" width="1.3" height="6.2" fill="#000"/><rect x="589.9" y="185.3" width="1.3" height="6.2" fill="#000"/><rect x="594.9" y="185.3" width="1.3" height="6.2" fill="#000"/><rect x="599.9" y="185.3" width="1.3" height="6.2" fill="#000"/><rect x="604.9" y="185.3" width="1.3" height="6.2" fill="#000"/><rect x="609.9" y="185.3" width="1.3" height="6.2" fill="#000"/><rect x="614.9" y="185.3" width="1.3" height="6.2" fill="#000"/><rect x="619.9" y="185.3" width="1.3" height="6.2" fill="#000"/><rect x="624.9" y="185.3" width="1.3" height="6.2" fill="#000"/><rect x="629.9" y="185.3" width="1.3" height="6.2" fill="#000"/><rect x="634.8" y="175" width="1.4" height="16.5" fill="#000"/><rect x="639.9" y="185.3" width="1.3" height="6.2" fill="#000"/><rect x="644.9" y="185.3" width="1.3" height="6.2" fill="#000"/><rect x="649.9" y="185.3" width="1.3" height="6.2" fill="#000"/><rect x="654.9" y="185.3" width="1.3" height="6.2" fill="#000"/><rect x="659.9" y="185.3" width="1.3" height="6.2" fill="#000"/><rect x="664.9" y="185.3" width="1.3" height="6.2" fill="#000"/><rect x="669.9" y="185.3" width="1.3" height="6.2" fill="#000"/><rect x="674.9" y="185.3" width="1.3" height="6.2" fill="#000"/><rect x="679.9" y="185.3" width="1.3" height="6.2" fill="#000"/><rect x="684.9" y="185.3" width="1.3" height="6.2" fill="#000"/><rect x="689.9" y="185.3" width="1.3" height="6.2" fill="#000"/><rect x="694.9" y="185.3" width="1.3" height="6.2" fill="#000"/><rect x="699.9" y="185.3" width="1.3" height="6.2" fill="#000"/><rect x="704.9" y="185.3" width="1.3" height="6.2" fill="#000"/><rect x="709.9" y="185.3" width="1.3" height="6.2" fill="#000"/><rect x="714.9" y="185.3" width="1.3" height="6.2" fill="#000"/><rect x="719.9" y="185.3" width="1.3" height="6.2" fill="#000"/><rect x="724.9" y="185.3" width="1.3" height="6.2" fill="#000"/><rect x="729.9" y="185.3" width="1.3" height="6.2" fill="#000"/><rect x="734.8" y="175" width="1.4" height="16.5" fill="#000"/><rect x="739.9" y="185.3" width="1.3" height="6.2" fill="#000"/><rect x="744.9" y="185.3" width="1.3" height="6.2" fill="#000"/><rect x="749.9" y="185.3" width="1.3" height="6.2" fill="#000"/><rect x="754.9" y="185.3" width="1.3" height="6.2" fill="#000"/><rect x="759.9" y="185.3" width="1.3" height="6.2" fill="#000"/><rect x="764.9" y="185.3" width="1.3" height="6.2" fill="#000"/><rect x="769.9" y="185.3" width="1.3" height="6.2" fill="#000"/><rect x="774.9" y="185.3" width="1.3" height="6.2" fill="#000"/><rect x="779.9" y="185.3" width="1.3" height="6.2" fill="#000"/><rect x="784.9" y="185.3" width="1.3" height="6.2" fill="#000"/><rect x="789.9" y="185.3" width="1.3" height="6.2" fill="#000"/><rect x="794.9" y="185.3" width="1.3" height="6.2" fill="#000"/><rect x="799.9" y="185.3" width="1.3" height="6.2" fill="#000"/><rect x="804.9" y="185.3" width="1.3" height="6.2" fill="#000"/><rect x="809.9" y="185.3" width="1.3" height="6.2" fill="#000"/><rect x="814.9" y="185.3" width="1.3" height="6.2" fill="#000"/><rect x="819.9" y="185.3" width="1.3" height="6.2" fill="#000"/><rect x="824.9" y="185.3" width="1.3" height="6.2" fill="#000"/><rect x="829.9" y="185.3" width="1.3" height="6.2" fill="#000"/><rect x="834.8" y="175" width="1.4" height="16.5" fill="#000"/><rect x="839.9" y="185.3" width="1.3" height="6.2" fill="#000"/><rect x="844.9" y="185.3" width="1.3" height="6.2" fill="#000"/><rect x="849.9" y="185.3" width="1.3" height="6.2" fill="#000"/><rect x="854.9" y="185.3" width="1.3" height="6.2" fill="#000"/><rect x="859.9" y="185.3" width="1.3" height="6.2" fill="#000"/><rect x="864.9" y="185.3" width="1.3" height="6.2" fill="#000"/><rect x="869.9" y="185.3" width="1.3" height="6.2" fill="#000"/><rect x="874.9" y="185.3" width="1.3" height="6.2" fill="#000"/><rect x="879.9" y="185.3" width="1.3" height="6.2" fill="#000"/><rect x="884.9" y="185.3" width="1.3" height="6.2" fill="#000"/><rect x="889.9" y="185.3" width="1.3" height="6.2" fill="#000"/><rect x="894.9" y="185.3" width="1.3" height="6.2" fill="#000"/><rect x="899.9" y="185.3" width="1.3" height="6.2" fill="#000"/><rect x="904.9" y="185.3" width="1.3" height="6.2" fill="#000"/><rect x="909.9" y="185.3" width="1.3" height="6.2" fill="#000"/><rect x="914.9" y="185.3" width="1.3" height="6.2" fill="#000"/><rect x="919.9" y="185.3" width="1.3" height="6.2" fill="#000"/><rect x="924.9" y="185.3" width="1.3" height="6.2" fill="#000"/><rect x="929.9" y="185.3" width="1.3" height="6.2" fill="#000"/><rect x="934.8" y="175" width="1.4" height="16.5" fill="#000"/><rect x="939.9" y="185.3" width="1.3" height="6.2" fill="#000"/><rect x="944.9" y="185.3" width="1.3" height="6.2" fill="#000"/><rect x="949.9" y="185.3" width="1.3" height="6.2" fill="#000"/><rect x="954.9" y="185.3" width="1.3" height="6.2" fill="#000"/><rect x="959.9" y="185.3" width="1.3" height="6.2" fill="#000"/><rect x="964.9" y="185.3" width="1.3" height="6.2" fill="#000"/><rect x="969.9" y="185.3" width="1.3" height="6.2" fill="#000"/><rect x="974.9" y="185.3" width="1.3" height="6.2" fill="#000"/><rect x="979.9" y="185.3" width="1.3" height="6.2" fill="#000"/><rect x="984.9" y="185.3" width="1.3" height="6.2" fill="#000"/><rect x="989.9" y="185.3" width="1.3" height="6.2" fill="#000"/><rect x="994.9" y="185.3" width="1.3" height="6.2" fill="#000"/><rect x="999.9" y="185.3" width="1.3" height="6.2" fill="#000"/><rect x="1004.9" y="185.3" width="1.3" height="6.2" fill="#000"/><rect x="1009.9" y="185.3" width="1.3" height="6.2" fill="#000"/><rect x="1014.9" y="185.3" width="1.3" height="6.2" fill="#000"/><rect x="1019.9" y="185.3" width="1.3" height="6.2" fill="#000"/><rect x="1024.8" y="185.3" width="1.3" height="6.2" fill="#000"/><rect x="1029.8" y="185.3" width="1.3" height="6.2" fill="#000"/><rect x="1034.8" y="175" width="1.4" height="16.5" fill="#000"/><rect x="1039.8" y="185.3" width="1.3" height="6.2" fill="#000"/><rect x="1044.8" y="185.3" width="1.3" height="6.2" fill="#000"/><rect x="1049.8" y="185.3" width="1.3" height="6.2" fill="#000"/><rect x="1054.8" y="185.3" width="1.3" height="6.2" fill="#000"/><rect x="1059.8" y="185.3" width="1.3" height="6.2" fill="#000"/><rect x="1064.8" y="185.3" width="1.3" height="6.2" fill="#000"/><rect x="1069.8" y="185.3" width="1.3" height="6.2" fill="#000"/><rect x="1074.8" y="185.3" width="1.3" height="6.2" fill="#000"/><rect x="1079.8" y="185.3" width="1.3" height="6.2" fill="#000"/><rect x="1084.8" y="185.3" width="1.3" height="6.2" fill="#000"/><rect x="1089.8" y="185.3" width="1.3" height="6.2" fill="#000"/><rect x="1094.8" y="185.3" width="1.3" height="6.2" fill="#000"/><rect x="1099.8" y="185.3" width="1.3" height="6.2" fill="#000"/><rect x="1104.8" y="185.3" width="1.3" height="6.2" fill="#000"/><rect x="1109.8" y="185.3" width="1.3" height="6.2" fill="#000"/><rect x="1114.8" y="185.3" width="1.3" height="6.2" fill="#000"/><rect x="1119.8" y="185.3" width="1.3" height="6.2" fill="#000"/><rect x="1124.8" y="185.3" width="1.3" height="6.2" fill="#000"/><rect x="1129.8" y="185.3" width="1.3" height="6.2" fill="#000"/><rect x="1134.8" y="175" width="1.4" height="16.5" fill="#000"/><rect x="1139.8" y="185.3" width="1.3" height="6.2" fill="#000"/><rect x="1144.8" y="185.3" width="1.3" height="6.2" fill="#000"/><rect x="1149.8" y="185.3" width="1.3" height="6.2" fill="#000"/><rect x="1154.8" y="185.3" width="1.3" height="6.2" fill="#000"/><rect x="1159.8" y="185.3" width="1.3" height="6.2" fill="#000"/><rect x="1164.8" y="185.3" width="1.3" height="6.2" fill="#000"/><rect x="1169.8" y="185.3" width="1.3" height="6.2" fill="#000"/><rect x="1174.8" y="185.3" width="1.3" height="6.2" fill="#000"/><rect x="1179.8" y="185.3" width="1.3" height="6.2" fill="#000"/><rect x="1184.8" y="185.3" width="1.3" height="6.2" fill="#000"/><rect x="1189.8" y="185.3" width="1.3" height="6.2" fill="#000"/><rect x="1194.8" y="185.3" width="1.3" height="6.2" fill="#000"/><rect x="1199.8" y="185.3" width="1.3" height="6.2" fill="#000"/><rect x="1204.8" y="185.3" width="1.3" height="6.2" fill="#000"/><rect x="1209.8" y="185.3" width="1.3" height="6.2" fill="#000"/><rect x="1214.8" y="185.3" width="1.3" height="6.2" fill="#000"/><rect x="1219.8" y="185.3" width="1.3" height="6.2" fill="#000"/><rect x="1224.8" y="185.3" width="1.3" height="6.2" fill="#000"/><rect x="1229.8" y="185.3" width="1.3" height="6.2" fill="#000"/><rect x="1234.8" y="175" width="1.4" height="16.5" fill="#000"/><rect x="1239.8" y="185.3" width="1.3" height="6.2" fill="#000"/><rect x="1244.8" y="185.3" width="1.3" height="6.2" fill="#000"/><rect x="1249.8" y="185.3" width="1.3" height="6.2" fill="#000"/><rect x="1254.8" y="185.3" width="1.3" height="6.2" fill="#000"/><rect x="1259.8" y="185.3" width="1.3" height="6.2" fill="#000"/><rect x="1264.8" y="185.3" width="1.3" height="6.2" fill="#000"/><rect x="1269.8" y="185.3" width="1.3" height="6.2" fill="#000"/><rect x="1274.8" y="185.3" width="1.3" height="6.2" fill="#000"/><rect x="1279.8" y="185.3" width="1.3" height="6.2" fill="#000"/><rect x="1284.8" y="185.3" width="1.3" height="6.2" fill="#000"/><rect x="1289.8" y="185.3" width="1.3" height="6.2" fill="#000"/><rect x="1294.8" y="185.3" width="1.3" height="6.2" fill="#000"/><rect x="1299.8" y="185.3" width="1.3" height="6.2" fill="#000"/><rect x="1304.8" y="185.3" width="1.3" height="6.2" fill="#000"/><rect x="1309.8" y="185.3" width="1.3" height="6.2" fill="#000"/><rect x="1314.8" y="185.3" width="1.3" height="6.2" fill="#000"/><rect x="1319.8" y="185.3" width="1.3" height="6.2" fill="#000"/><rect x="1324.8" y="185.3" width="1.3" height="6.2" fill="#000"/><rect x="1329.8" y="185.3" width="1.3" height="6.2" fill="#000"/><rect x="1334.8" y="175" width="1.4" height="16.5" fill="#000"/><rect x="1339.8" y="185.3" width="1.3" height="6.2" fill="#000"/><rect x="1344.8" y="185.3" width="1.3" height="6.2" fill="#000"/><rect x="1349.8" y="185.3" width="1.3" height="6.2" fill="#000"/><rect x="1354.8" y="185.3" width="1.3" height="6.2" fill="#000"/><rect x="1359.8" y="185.3" width="1.3" height="6.2" fill="#000"/><rect x="1364.8" y="185.3" width="1.3" height="6.2" fill="#000"/><rect x="1369.8" y="185.3" width="1.3" height="6.2" fill="#000"/><rect x="1374.8" y="185.3" width="1.3" height="6.2" fill="#000"/><rect x="1379.8" y="185.3" width="1.3" height="6.2" fill="#000"/><rect x="1384.8" y="185.3" width="1.3" height="6.2" fill="#000"/><rect x="1389.8" y="185.3" width="1.3" height="6.2" fill="#000"/><rect x="1394.8" y="185.3" width="1.3" height="6.2" fill="#000"/><rect x="1399.8" y="185.3" width="1.3" height="6.2" fill="#000"/><rect x="1404.8" y="185.3" width="1.3" height="6.2" fill="#000"/><rect x="1409.8" y="185.3" width="1.3" height="6.2" fill="#000"/><rect x="1414.8" y="185.3" width="1.3" height="6.2" fill="#000"/><rect x="1419.8" y="185.3" width="1.3" height="6.2" fill="#000"/><rect x="1424.8" y="185.3" width="1.3" height="6.2" fill="#000"/><rect x="1429.8" y="185.3" width="1.3" height="6.2" fill="#000"/><rect x="1434.8" y="175" width="1.4" height="16.5" fill="#000"/><rect x="1439.8" y="185.3" width="1.3" height="6.2" fill="#000"/><rect x="1444.8" y="185.3" width="1.3" height="6.2" fill="#000"/><rect x="1449.8" y="185.3" width="1.3" height="6.2" fill="#000"/><rect x="1454.8" y="185.3" width="1.3" height="6.2" fill="#000"/><rect x="223" y="203.7" width="14.5" height="1.4" fill="#000"/><rect x="232" y="208.8" width="5" height="1.3" fill="#000"/><rect x="232" y="213.8" width="5" height="1.3" fill="#000"/><rect x="232" y="218.8" width="5" height="1.3" fill="#000"/><rect x="232" y="223.8" width="5" height="1.3" fill="#000"/><rect x="232" y="228.8" width="5" height="1.3" fill="#000"/><rect x="232" y="233.8" width="5" height="1.3" fill="#000"/><rect x="232" y="238.8" width="5" height="1.3" fill="#000"/><rect x="232" y="243.8" width="5" height="1.3" fill="#000"/><rect x="232" y="248.8" width="5" height="1.3" fill="#000"/><rect x="232" y="253.8" width="5" height="1.3" fill="#000"/><rect x="232" y="258.8" width="5" height="1.3" fill="#000"/><rect x="232" y="263.8" width="5" height="1.3" fill="#000"/><rect x="232" y="268.8" width="5" height="1.3" fill="#000"/><rect x="232" y="273.8" width="5" height="1.3" fill="#000"/><rect x="232" y="278.8" width="5" height="1.3" fill="#000"/><rect x="232" y="283.8" width="5" height="1.3" fill="#000"/><rect x="232" y="288.8" width="5" height="1.3" fill="#000"/><rect x="232" y="293.8" width="5" height="1.3" fill="#000"/><rect x="232" y="298.8" width="5" height="1.3" fill="#000"/><rect x="223" y="303.7" width="14.5" height="1.4" fill="#000"/><rect x="232" y="308.8" width="5" height="1.3" fill="#000"/><rect x="232" y="313.8" width="5" height="1.3" fill="#000"/><rect x="232" y="318.8" width="5" height="1.3" fill="#000"/><rect x="232" y="323.8" width="5" height="1.3" fill="#000"/><rect x="232" y="328.8" width="5" height="1.3" fill="#000"/><rect x="232" y="333.8" width="5" height="1.3" fill="#000"/><rect x="232" y="338.8" width="5" height="1.3" fill="#000"/><rect x="232" y="343.8" width="5" height="1.3" fill="#000"/><rect x="232" y="348.8" width="5" height="1.3" fill="#000"/><rect x="232" y="353.8" width="5" height="1.3" fill="#000"/><rect x="232" y="358.8" width="5" height="1.3" fill="#000"/><rect x="232" y="363.8" width="5" height="1.3" fill="#000"/><rect x="232" y="368.8" width="5" height="1.3" fill="#000"/><rect x="232" y="373.8" width="5" height="1.3" fill="#000"/><rect x="232" y="378.8" width="5" height="1.3" fill="#000"/><rect x="232" y="383.8" width="5" height="1.3" fill="#000"/><rect x="232" y="388.8" width="5" height="1.3" fill="#000"/><rect x="232" y="393.8" width="5" height="1.3" fill="#000"/><rect x="232" y="398.8" width="5" height="1.3" fill="#000"/><rect x="223" y="403.7" width="14.5" height="1.4" fill="#000"/><rect x="232" y="408.8" width="5" height="1.3" fill="#000"/><rect x="232" y="413.8" width="5" height="1.3" fill="#000"/><rect x="232" y="418.8" width="5" height="1.3" fill="#000"/><rect x="232" y="423.8" width="5" height="1.3" fill="#000"/><rect x="232" y="428.8" width="5" height="1.3" fill="#000"/><rect x="232" y="433.8" width="5" height="1.3" fill="#000"/><rect x="232" y="438.8" width="5" height="1.3" fill="#000"/><rect x="232" y="443.8" width="5" height="1.3" fill="#000"/><rect x="232" y="448.8" width="5" height="1.3" fill="#000"/><rect x="232" y="453.8" width="5" height="1.3" fill="#000"/><rect x="232" y="458.8" width="5" height="1.3" fill="#000"/><rect x="232" y="463.8" width="5" height="1.3" fill="#000"/><rect x="232" y="468.8" width="5" height="1.3" fill="#000"/><rect x="232" y="473.8" width="5" height="1.3" fill="#000"/><rect x="232" y="478.8" width="5" height="1.3" fill="#000"/><rect x="232" y="483.8" width="5" height="1.3" fill="#000"/><rect x="232" y="488.8" width="5" height="1.3" fill="#000"/><rect x="232" y="493.8" width="5" height="1.3" fill="#000"/><rect x="232" y="498.8" width="5" height="1.3" fill="#000"/><rect x="223" y="503.7" width="14.5" height="1.4" fill="#000"/><rect x="232" y="508.8" width="5" height="1.3" fill="#000"/><rect x="232" y="513.8" width="5" height="1.3" fill="#000"/><rect x="232" y="518.8" width="5" height="1.3" fill="#000"/><rect x="232" y="523.8" width="5" height="1.3" fill="#000"/><rect x="232" y="528.8" width="5" height="1.3" fill="#000"/><rect x="232" y="533.8" width="5" height="1.3" fill="#000"/><rect x="232" y="538.8" width="5" height="1.3" fill="#000"/><rect x="232" y="543.8" width="5" height="1.3" fill="#000"/><rect x="232" y="548.8" width="5" height="1.3" fill="#000"/><rect x="232" y="553.8" width="5" height="1.3" fill="#000"/><rect x="232" y="558.8" width="5" height="1.3" fill="#000"/><rect x="232" y="563.8" width="5" height="1.3" fill="#000"/><rect x="232" y="568.8" width="5" height="1.3" fill="#000"/><rect x="232" y="573.8" width="5" height="1.3" fill="#000"/><rect x="232" y="578.8" width="5" height="1.3" fill="#000"/><rect x="232" y="583.8" width="5" height="1.3" fill="#000"/><rect x="232" y="588.8" width="5" height="1.3" fill="#000"/><rect x="232" y="593.8" width="5" height="1.3" fill="#000"/><rect x="232" y="598.8" width="5" height="1.3" fill="#000"/><rect x="223" y="603.7" width="14.5" height="1.4" fill="#000"/><rect x="232" y="608.8" width="5" height="1.3" fill="#000"/><rect x="232" y="613.8" width="5" height="1.3" fill="#000"/><rect x="232" y="618.8" width="5" height="1.3" fill="#000"/><rect x="232" y="623.8" width="5" height="1.3" fill="#000"/><rect x="232" y="628.8" width="5" height="1.3" fill="#000"/><rect x="232" y="633.8" width="5" height="1.3" fill="#000"/><rect x="232" y="638.8" width="5" height="1.3" fill="#000"/><rect x="232" y="643.8" width="5" height="1.3" fill="#000"/><rect x="232" y="648.8" width="5" height="1.3" fill="#000"/><rect x="232" y="653.8" width="5" height="1.3" fill="#000"/><rect x="232" y="658.8" width="5" height="1.3" fill="#000"/><rect x="232" y="663.8" width="5" height="1.3" fill="#000"/><rect x="232" y="668.8" width="5" height="1.3" fill="#000"/><rect x="232" y="673.8" width="5" height="1.3" fill="#000"/><rect x="232" y="678.8" width="5" height="1.3" fill="#000"/><rect x="232" y="683.8" width="5" height="1.3" fill="#000"/><rect x="232" y="688.8" width="5" height="1.3" fill="#000"/><rect x="232" y="693.8" width="5" height="1.3" fill="#000"/><rect x="232" y="698.8" width="5" height="1.3" fill="#000"/><rect x="223" y="703.7" width="14.5" height="1.4" fill="#000"/><rect x="232" y="708.8" width="5" height="1.3" fill="#000"/><rect x="232" y="713.8" width="5" height="1.3" fill="#000"/><rect x="232" y="718.8" width="5" height="1.3" fill="#000"/><rect x="232" y="723.8" width="5" height="1.3" fill="#000"/><rect x="232" y="728.8" width="5" height="1.3" fill="#000"/><rect x="232" y="733.8" width="5" height="1.3" fill="#000"/><rect x="232" y="738.8" width="5" height="1.3" fill="#000"/><rect x="232" y="743.8" width="5" height="1.3" fill="#000"/><rect x="232" y="748.8" width="5" height="1.3" fill="#000"/><rect x="232" y="753.8" width="5" height="1.3" fill="#000"/><rect x="232" y="758.8" width="5" height="1.3" fill="#000"/><rect x="232" y="763.8" width="5" height="1.3" fill="#000"/><rect x="232" y="768.8" width="5" height="1.3" fill="#000"/><rect x="232" y="773.8" width="5" height="1.3" fill="#000"/><rect x="232" y="778.8" width="5" height="1.3" fill="#000"/><rect x="232" y="783.8" width="5" height="1.3" fill="#000"/><rect x="232" y="788.8" width="5" height="1.3" fill="#000"/><rect x="232" y="793.8" width="5" height="1.3" fill="#000"/><rect x="232" y="798.8" width="5" height="1.3" fill="#000"/><rect x="223" y="803.7" width="14.5" height="1.4" fill="#000"/><rect x="232" y="808.8" width="5" height="1.3" fill="#000"/><rect x="232" y="813.8" width="5" height="1.3" fill="#000"/><rect x="232" y="818.8" width="5" height="1.3" fill="#000"/><rect x="232" y="823.8" width="5" height="1.3" fill="#000"/><rect x="232" y="828.8" width="5" height="1.3" fill="#000"/><rect x="232" y="833.8" width="5" height="1.3" fill="#000"/><rect x="232" y="838.8" width="5" height="1.3" fill="#000"/><rect x="232" y="843.8" width="5" height="1.3" fill="#000"/><rect x="232" y="848.8" width="5" height="1.3" fill="#000"/><rect x="232" y="853.8" width="5" height="1.3" fill="#000"/><rect x="232" y="858.8" width="5" height="1.3" fill="#000"/><rect x="232" y="863.8" width="5" height="1.3" fill="#000"/><rect x="232" y="868.8" width="5" height="1.3" fill="#000"/><rect x="232" y="873.8" width="5" height="1.3" fill="#000"/><rect x="232" y="878.8" width="5" height="1.3" fill="#000"/><rect x="232" y="883.8" width="5" height="1.3" fill="#000"/><rect x="232" y="888.8" width="5" height="1.3" fill="#000"/><rect x="232" y="893.8" width="5" height="1.3" fill="#000"/><rect x="232" y="898.8" width="5" height="1.3" fill="#000"/><rect x="223" y="903.7" width="14.5" height="1.4" fill="#000"/><rect x="232" y="908.8" width="5" height="1.3" fill="#000"/><rect x="232" y="913.8" width="5" height="1.3" fill="#000"/><rect x="232" y="918.8" width="5" height="1.3" fill="#000"/><rect x="232" y="923.8" width="5" height="1.3" fill="#000"/><rect x="232" y="928.8" width="5" height="1.3" fill="#000"/><rect x="232" y="933.8" width="5" height="1.3" fill="#000"/><rect x="239.8" y="175" width="1.2" height="15.5" fill="#000"/><rect x="1139.8" y="175" width="1.2" height="12" fill="#000"/><rect x="222.5" y="193.6" width="14.2" height="1.3" fill="#000"/><rect x="237.8" y="173.5" width="1" height="19" fill="#b4b4b4"/></svg>
<span class="t" style="left:430.0px;top:177px;font-size:9.6px;color:#222;letter-spacing:-0.55px">0</span>
<span class="t" style="left:520.5px;top:177px;font-size:9.6px;color:#222;letter-spacing:-0.55px">100</span>
<span class="t" style="left:620.5px;top:177px;font-size:9.6px;color:#222;letter-spacing:-0.55px">200</span>
<span class="t" style="left:720.5px;top:177px;font-size:9.6px;color:#222;letter-spacing:-0.55px">300</span>
<span class="t" style="left:820.5px;top:177px;font-size:9.6px;color:#222;letter-spacing:-0.55px">400</span>
<span class="t" style="left:920.5px;top:177px;font-size:9.6px;color:#222;letter-spacing:-0.55px">500</span>
<span class="t" style="left:1020.5px;top:177px;font-size:9.6px;color:#222;letter-spacing:-0.55px">600</span>
<span class="t" style="left:1120.5px;top:177px;font-size:9.6px;color:#222;letter-spacing:-0.55px">700</span>
<span class="t" style="left:1220.5px;top:177px;font-size:9.6px;color:#222;letter-spacing:-0.55px">800</span>
<span class="t" style="left:1320.5px;top:177px;font-size:9.6px;color:#222;letter-spacing:-0.55px">900</span>
<span class="t" style="left:1415.5px;top:177px;font-size:9.6px;color:#222;letter-spacing:-0.55px">1000</span>
<span class="t serif" style="left:222.3px;top:203.1px;font-size:10px;color:#111;transform-origin:0 0;transform:rotate(-90deg);letter-spacing:-0.3px">0</span>
<span class="t serif" style="left:222.3px;top:303.1px;font-size:10px;color:#111;transform-origin:0 0;transform:rotate(-90deg);letter-spacing:-0.3px">100</span>
<span class="t serif" style="left:222.3px;top:403.1px;font-size:10px;color:#111;transform-origin:0 0;transform:rotate(-90deg);letter-spacing:-0.3px">200</span>
<span class="t serif" style="left:222.3px;top:503.1px;font-size:10px;color:#111;transform-origin:0 0;transform:rotate(-90deg);letter-spacing:-0.3px">300</span>
<span class="t serif" style="left:222.3px;top:603.1px;font-size:10px;color:#111;transform-origin:0 0;transform:rotate(-90deg);letter-spacing:-0.3px">400</span>
<span class="t serif" style="left:222.3px;top:703.1px;font-size:10px;color:#111;transform-origin:0 0;transform:rotate(-90deg);letter-spacing:-0.3px">500</span>
<span class="t serif" style="left:222.3px;top:803.1px;font-size:10px;color:#111;transform-origin:0 0;transform:rotate(-90deg);letter-spacing:-0.3px">600</span>
<span class="t serif" style="left:222.3px;top:903.1px;font-size:10px;color:#111;transform-origin:0 0;transform:rotate(-90deg);letter-spacing:-0.3px">700</span>
<div class="abs" style="left:223.5px;top:177px;width:11.5px;height:11.5px;background:#fff;border:1px solid #8fb0dc;border-top:2.5px solid #6d9fe2"></div>
<div class="abs" style="left:225.5px;top:180.5px;width:4.5px;height:2px;background:#f09b4a"></div>
<div class="abs" style="left:225.5px;top:182.5px;width:1px;height:3.5px;background:#e08a3a"></div>
<div id="hmiwrap" class="abs" style="left:0;top:0;width:1470px;height:933px;overflow:hidden">
<div class="abs" style="left:437px;top:206px;width:1023px;height:740px;background:#000"></div>
<div class="abs" style="left:1455px;top:208px;width:3px;height:740px;background:linear-gradient(90deg,#b9c4c4,#5a6464)"></div>
<div class="abs" style="left:439px;top:208px;width:1016px;height:740px;background:#388e8e"></div>
<svg class="abs" style="left:439px;top:208px" width="1016" height="725"><defs><pattern id="dots" x="16" y="16" width="20" height="20" patternUnits="userSpaceOnUse"><rect x="0" y="0" width="1.2" height="1.2" fill="#d8f4f0"/></pattern></defs><rect width="1016" height="725" fill="url(#dots)"/></svg>
<div class="abs" style="left:440px;top:285px;width:1015px;height:4px;background:#7fffd4;border-radius:2px 0 0 2px"></div>
<svg class="abs" style="left:1040px;top:205px" width="70" height="85"><line x1="57.5" y1="3" x2="7" y2="80" stroke="#7fffd4" stroke-width="1.2"/></svg>
<div class="abs" style="left:1091px;top:241px;width:355px;height:2px;background:#7fffd4"></div>
<svg class="abs" style="left:0;top:0" width="1470" height="933"><rect x="446" y="299" width="1001.5" height="640" fill="none" stroke="#7fffd4" stroke-width="1"/><rect x="447.5" y="300.5" width="998.5" height="640" fill="none" stroke="#6fe0c8" stroke-width="1.4"/><line x1="546.5" y1="300" x2="546.5" y2="933" stroke="#7fffd4" stroke-width="1.2"/><line x1="646.5" y1="300" x2="646.5" y2="933" stroke="#7fffd4" stroke-width="1.2"/><line x1="746.5" y1="300" x2="746.5" y2="933" stroke="#7fffd4" stroke-width="1.2"/><line x1="846.5" y1="300" x2="846.5" y2="933" stroke="#7fffd4" stroke-width="1.2"/><line x1="946.5" y1="300" x2="946.5" y2="933" stroke="#7fffd4" stroke-width="1.2"/><line x1="1046.5" y1="300" x2="1046.5" y2="933" stroke="#7fffd4" stroke-width="1.2"/><line x1="1146.5" y1="300" x2="1146.5" y2="933" stroke="#7fffd4" stroke-width="1.2"/><line x1="1246.5" y1="300" x2="1246.5" y2="933" stroke="#7fffd4" stroke-width="1.2"/><line x1="1346.5" y1="300" x2="1346.5" y2="933" stroke="#7fffd4" stroke-width="1.2"/><line x1="447" y1="345.4" x2="1447" y2="345.4" stroke="#7fffd4" stroke-width="1.2"/><line x1="447" y1="392.3" x2="1447" y2="392.3" stroke="#7fffd4" stroke-width="1.2"/><line x1="447" y1="439.1" x2="1447" y2="439.1" stroke="#7fffd4" stroke-width="1.2"/><line x1="447" y1="486.0" x2="1447" y2="486.0" stroke="#7fffd4" stroke-width="1.2"/><line x1="447" y1="532.9" x2="1447" y2="532.9" stroke="#7fffd4" stroke-width="1.2"/><line x1="447" y1="579.8" x2="1447" y2="579.8" stroke="#7fffd4" stroke-width="1.2"/><line x1="447" y1="626.6" x2="1447" y2="626.6" stroke="#7fffd4" stroke-width="1.2"/><line x1="447" y1="673.5" x2="1447" y2="673.5" stroke="#7fffd4" stroke-width="1.2"/><line x1="447" y1="720.4" x2="1447" y2="720.4" stroke="#7fffd4" stroke-width="1.2"/><line x1="447" y1="767.2" x2="1447" y2="767.2" stroke="#7fffd4" stroke-width="1.2"/><line x1="447" y1="814.1" x2="1447" y2="814.1" stroke="#7fffd4" stroke-width="1.2"/><line x1="447" y1="861.0" x2="1447" y2="861.0" stroke="#7fffd4" stroke-width="1.2"/><line x1="447" y1="907.8" x2="1447" y2="907.8" stroke="#7fffd4" stroke-width="1.2"/><line x1="447" y1="954.7" x2="1447" y2="954.7" stroke="#7fffd4" stroke-width="1.2"/></svg>
<span class="t" style="left:1094px;top:208.5px;font-size:32.5px;color:#00ff00">2021/03/10</span>
<span class="t" style="left:1258.5px;top:211px;font-size:33.3px;letter-spacing:-0.8px;color:#00ff00">星期日</span>
<span class="t" style="left:1357.6px;top:208.5px;font-size:32.5px;color:#00ff00">11:03:45</span>
<span class="t" style="left:741.5px;top:216px;font-size:43.2px;letter-spacing:-1px;color:#ffff00">铜带镍锡连续电镀线</span>
<span class="t" style="left:1120px;top:210px;font-size:46px;color:#ffff00;transform:scaleX(0.84);transform-origin:0 50%">T1</span>
<span class="t" style="left:1067.5px;top:250px;font-size:41.95px;color:#0000ff"><span style="font-size:44px">A</span>线整流机上下限报警</span>
<span class="t" style="left:795.5px;top:255.3px;font-size:35.5px;letter-spacing:1.75px;font-style:italic;color:#fff">Auto-Ni</span>
<span class="t" style="left:933px;top:255.3px;font-size:35.5px;letter-spacing:0.8px;font-style:italic;color:#fff">Or</span>
<span class="t" style="left:980px;top:255.3px;font-size:35.5px;letter-spacing:0.5px;font-style:italic;color:#fff">Sn</span>
<span class="t" style="left:1029.8px;top:255.3px;font-size:35.5px;letter-spacing:1.4px;font-style:italic;color:#fff">line</span>
<svg class="abs" style="left:453.3px;top:221.2px" width="107.4" height="51.4" viewBox="0 0 107.4 51.4"><defs><linearGradient id="b1t" x1="0" y1="0" x2="1" y2="0"><stop offset="0" stop-color="#9fd6e8"/><stop offset=".22" stop-color="#5a8797"/><stop offset=".55" stop-color="#3f6572"/><stop offset="1" stop-color="#34586a"/></linearGradient><linearGradient id="b1l" x1="0" y1="0" x2="0" y2="1"><stop offset="0" stop-color="#86c8e0"/><stop offset=".6" stop-color="#a4dcf2"/><stop offset="1" stop-color="#ffffff"/></linearGradient><linearGradient id="b1r" x1="0" y1="0" x2="0" y2="1"><stop offset="0" stop-color="#33566a"/><stop offset=".5" stop-color="#4d8298"/><stop offset="1" stop-color="#69bcd8"/></linearGradient><linearGradient id="b1b" x1="0" y1="0" x2="1" y2="0"><stop offset="0" stop-color="#ffffff"/><stop offset=".22" stop-color="#9bdaf0"/><stop offset=".6" stop-color="#66b8d8"/><stop offset="1" stop-color="#5cafd0"/></linearGradient><linearGradient id="b1f" x1="0" y1="0" x2="0" y2="1"><stop offset="0" stop-color="#88d8f6"/><stop offset="1" stop-color="#79cdf2"/></linearGradient><clipPath id="b1c"><rect x="0.5" y="0.5" width="106.4" height="50.4" rx="5" ry="5"/></clipPath></defs><g clip-path="url(#b1c)"><polygon points="0,0 107.4,0 100.9,6.5 6,6.5" fill="url(#b1t)"/><polygon points="0,0 6,6.5 6,45.4 0,51.4" fill="url(#b1l)"/><polygon points="107.4,0 107.4,51.4 100.9,45.4 100.9,6.5" fill="url(#b1r)"/><polygon points="0,51.4 6,45.4 100.9,45.4 107.4,51.4" fill="url(#b1b)"/></g><rect x="5.5" y="6.0" width="95.9" height="39.9" rx="3.5" fill="url(#b1f)"/><rect x="0.5" y="0.5" width="106.4" height="50.4" rx="5" ry="5" fill="none" stroke="#2b6f70" stroke-width="1"/></svg>
<svg class="abs" style="left:586.8px;top:220.2px" width="91.6" height="53.2" viewBox="0 0 91.6 53.2"><defs><linearGradient id="b2t" x1="0" y1="0" x2="1" y2="0"><stop offset="0" stop-color="#9fd6e8"/><stop offset=".22" stop-color="#5a8797"/><stop offset=".55" stop-color="#3f6572"/><stop offset="1" stop-color="#34586a"/></linearGradient><linearGradient id="b2l" x1="0" y1="0" x2="0" y2="1"><stop offset="0" stop-color="#86c8e0"/><stop offset=".6" stop-color="#a4dcf2"/><stop offset="1" stop-color="#ffffff"/></linearGradient><linearGradient id="b2r" x1="0" y1="0" x2="0" y2="1"><stop offset="0" stop-color="#33566a"/><stop offset=".5" stop-color="#4d8298"/><stop offset="1" stop-color="#69bcd8"/></linearGradient><linearGradient id="b2b" x1="0" y1="0" x2="1" y2="0"><stop offset="0" stop-color="#ffffff"/><stop offset=".22" stop-color="#9bdaf0"/><stop offset=".6" stop-color="#66b8d8"/><stop offset="1" stop-color="#5cafd0"/></linearGradient><linearGradient id="b2f" x1="0" y1="0" x2="0" y2="1"><stop offset="0" stop-color="#88d8f6"/><stop offset="1" stop-color="#79cdf2"/></linearGradient><clipPath id="b2c"><rect x="0.5" y="0.5" width="90.6" height="52.2" rx="5" ry="5"/></clipPath></defs><g clip-path="url(#b2c)"><polygon points="0,0 91.6,0 85.1,6.5 6,6.5" fill="url(#b2t)"/><polygon points="0,0 6,6.5 6,47.2 0,53.2" fill="url(#b2l)"/><polygon points="91.6,0 91.6,53.2 85.1,47.2 85.1,6.5" fill="url(#b2r)"/><polygon points="0,53.2 6,47.2 85.1,47.2 91.6,53.2" fill="url(#b2b)"/></g><rect x="5.5" y="6.0" width="80.1" height="41.7" rx="3.5" fill="url(#b2f)"/><rect x="0.5" y="0.5" width="90.6" height="52.2" rx="5" ry="5" fill="none" stroke="#2b6f70" stroke-width="1"/></svg>
<span class="t" style="left:450.5px;top:238.5px;font-size:27.6px;color:#0000ff">系统首页</span>
<span class="t serif" style="left:591.5px;top:238.6px;font-size:24px;letter-spacing:3.8px;color:#111;font-weight:500">整流机</span>
<span class="hd" style="left:546.2px;top:313.2px;color:#ffff00">电压上限</span>
<span class="hd" style="left:642.6px;top:313.2px;color:#ff9a4a">电压下限</span>
<span class="hd" style="left:746.3px;top:313.2px;color:#c8ffff">电流上限</span>
<span class="hd" style="left:850.4px;top:313.2px;color:#ff6432">电流下限</span>
<span class="hd" style="left:1045.8px;top:313.2px;color:#ffff00">电压上限</span>
<span class="hd" style="left:1146.5px;top:313.2px;color:#ff9a4a">电压下限</span>
<span class="hd" style="left:1245.4px;top:313.2px;color:#c8ffff">电流上限</span>
<span class="hd" style="left:1348.1px;top:313.2px;color:#ff6432">电流下限</span>
<span class="lab" style="left:465.2px;top:360.3px">电解一</span>
<span class="lab" style="left:465.2px;top:403.5px">电解二</span>
<span class="lab" style="left:462.8px;top:450.8px">电解三</span>
<span class="lab" style="left:464.4px;top:496.8px">电解四</span>
<span class="lab" style="left:465.2px;top:545.8px">底</span>
<span class="lab" style="left:522.2px;top:545.8px">镍</span>
<span class="lab" style="left:466.9px;top:590.5px">镍</span>
<span class="lab" style="left:523.2px;top:590.5px">一</span>
<span class="lab" style="left:465.3px;top:639.8px">镍</span>
<span class="lab" style="left:514.7px;top:639.8px">二</span>
<span class="lab" style="left:467.7px;top:689.0px">镍</span>
<span class="lab" style="left:516.2px;top:689.0px">三</span>
<span class="lab" style="left:465.3px;top:733.1px">镍</span>
<span class="lab" style="left:515.2px;top:733.1px">四</span>
<span class="lab" style="left:466.7px;top:779.5px">镍</span>
<span class="lab" style="left:515.7px;top:779.5px">五</span>
<span class="lab" style="left:469.4px;top:822.9px">镍</span>
<span class="lab" style="left:518.2px;top:822.9px">六</span>
<span class="lab" style="left:465.3px;top:873.1px">镍</span>
<span class="lab" style="left:514.7px;top:873.1px">七</span>
<span class="lab" style="left:463.59999999999997px;top:917.8px">镍</span>
<span class="lab" style="left:513.7px;top:917.8px">八</span>
<span class="lab" style="left:953.4px;top:359.3px">高温镍1</span>
<span class="lab" style="left:952.4px;top:407.3px">高温镍2</span>
<span class="lab" style="left:956.5px;top:455.3px">锡</span>
<span class="lab" style="left:1013.5px;top:455.3px">一</span>
<span class="lab" style="left:956.5px;top:499.5px">锡</span>
<span class="lab" style="left:1005.0px;top:499.5px">二</span>
<span class="lab" style="left:956.5px;top:545.8px">锡</span>
<span class="lab" style="left:1005.0px;top:545.8px">三</span>
<span class="lab" style="left:956.5px;top:595.3px">锡</span>
<span class="lab" style="left:1007.0px;top:595.3px">四</span>
<span class="lab" style="left:956.6px;top:638.1px">锡</span>
<span class="lab" style="left:1004.5px;top:638.1px">五</span>
<span class="lab" style="left:956.6px;top:682.9px">锡</span>
<span class="lab" style="left:1004.5px;top:682.9px">六</span>
<span class="lab" style="left:957.7px;top:732.0px">锡</span>
<span class="lab" style="left:1006.0px;top:732.0px">七</span>
<span class="lab" style="left:957.7px;top:777.8px">锡</span>
<span class="lab" style="left:1006.0px;top:777.8px">八</span>
<div class="nb" style="left:551.7px;top:349.3px"><span style="">##.#</span></div>
<div class="nb" style="left:651.0px;top:349.3px"><span style="">##.#</span></div>
<div class="nb" style="left:750.7px;top:349.3px"><span style=";left:-6px">###</span></div>
<div class="nb" style="left:851.6px;top:349.3px"><span style=";left:-6px">###</span></div>
<div class="nb" style="left:551.7px;top:396.3px"><span style="">##.#</span></div>
<div class="nb" style="left:651.0px;top:396.3px"><span style="">##.#</span></div>
<div class="nb" style="left:750.7px;top:396.3px"><span style=";left:-6px">###</span></div>
<div class="nb" style="left:851.6px;top:396.3px"><span style=";left:-6px">###</span></div>
<div class="nb" style="left:551.7px;top:443.3px"><span style="">##.#</span></div>
<div class="nb" style="left:651.0px;top:443.3px"><span style="">##.#</span></div>
<div class="nb" style="left:750.7px;top:443.3px"><span style=";left:-6px">###</span></div>
<div class="nb" style="left:851.6px;top:443.3px"><span style=";left:-6px">###</span></div>
<div class="nb" style="left:551.7px;top:490.3px"><span style="">##.#</span></div>
<div class="nb" style="left:651.0px;top:490.3px"><span style="">##.#</span></div>
<div class="nb" style="left:750.7px;top:490.3px"><span style=";left:-6px">###</span></div>
<div class="nb" style="left:851.6px;top:490.3px"><span style=";left:-6px">###</span></div>
<div class="nb" style="left:551.7px;top:537.3px"><span style="">##.#</span></div>
<div class="nb" style="left:651.0px;top:537.3px"><span style="">##.#</span></div>
<div class="nb" style="left:750.7px;top:537.3px"><span style=";left:-6px">###</span></div>
<div class="nb" style="left:851.6px;top:537.3px"><span style=";left:-6px">###</span></div>
<div class="nb" style="left:551.7px;top:584.3px"><span style="">##.#</span></div>
<div class="nb" style="left:651.0px;top:584.3px"><span style="">##.#</span></div>
<div class="nb" style="left:750.7px;top:584.3px"><span style=";left:-6px">###</span></div>
<div class="nb" style="left:851.6px;top:584.3px"><span style=";left:-6px">###</span></div>
<div class="nb" style="left:551.7px;top:631.3px"><span style="">##.#</span></div>
<div class="nb" style="left:651.0px;top:631.3px"><span style="">##.#</span></div>
<div class="nb" style="left:750.7px;top:631.3px"><span style=";left:-6px">###</span></div>
<div class="nb" style="left:851.6px;top:631.3px"><span style=";left:-6px">###</span></div>
<div class="nb" style="left:551.7px;top:678.3px"><span style="">##.#</span></div>
<div class="nb" style="left:651.0px;top:678.3px"><span style="">##.#</span></div>
<div class="nb" style="left:750.7px;top:678.3px"><span style=";left:-6px">###</span></div>
<div class="nb" style="left:851.6px;top:678.3px"><span style=";left:-6px">###</span></div>
<div class="nb" style="left:551.7px;top:725.3px"><span style="">##.#</span></div>
<div class="nb" style="left:651.0px;top:725.3px"><span style="">##.#</span></div>
<div class="nb" style="left:750.7px;top:725.3px"><span style=";left:-6px">###</span></div>
<div class="nb" style="left:851.6px;top:725.3px"><span style=";left:-6px">###</span></div>
<div class="nb" style="left:551.7px;top:772.3px"><span style="">##.#</span></div>
<div class="nb" style="left:651.0px;top:772.3px"><span style="">##.#</span></div>
<div class="nb" style="left:750.7px;top:772.3px"><span style=";left:-6px">###</span></div>
<div class="nb" style="left:851.6px;top:772.3px"><span style=";left:-6px">###</span></div>
<div class="nb" style="left:551.7px;top:819.3px"><span style="">##.#</span></div>
<div class="nb" style="left:651.0px;top:819.3px"><span style="">##.#</span></div>
<div class="nb" style="left:750.7px;top:819.3px"><span style=";left:-6px">###</span></div>
<div class="nb" style="left:851.6px;top:819.3px"><span style=";left:-6px">###</span></div>
<div class="nb" style="left:551.7px;top:866.3px"><span style="">##.#</span></div>
<div class="nb" style="left:651.0px;top:866.3px"><span style="">##.#</span></div>
<div class="nb" style="left:750.7px;top:866.3px"><span style=";left:-6px">###</span></div>
<div class="nb" style="left:851.6px;top:866.3px"><span style=";left:-6px">###</span></div>
<div class="nb" style="left:551.7px;top:913.3px"><span style="">##.#</span></div>
<div class="nb" style="left:651.0px;top:913.3px"><span style="">##.#</span></div>
<div class="nb" style="left:750.7px;top:913.3px"><span style=";left:-6px">###</span></div>
<div class="nb" style="left:851.6px;top:913.3px"><span style=";left:-6px">###</span></div>
<div class="nb" style="left:1051.7px;top:349.3px"><span style="">##.#</span></div>
<div class="nb" style="left:1151.0px;top:349.3px"><span style="">##.#</span></div>
<div class="nb" style="left:1250.7px;top:349.3px"><span style=";left:-6px">###</span></div>
<div class="nb" style="left:1351.6px;top:349.3px"><span style=";left:-6px">###</span></div>
<div class="nb" style="left:1051.7px;top:396.3px"><span style="">##.#</span></div>
<div class="nb" style="left:1151.0px;top:396.3px"><span style="">##.#</span></div>
<div class="nb" style="left:1250.7px;top:396.3px"><span style=";left:-6px">###</span></div>
<div class="nb" style="left:1351.6px;top:396.3px"><span style=";left:-6px">###</span></div>
<div class="nb" style="left:1051.7px;top:443.3px"><span style="">##.#</span></div>
<div class="nb" style="left:1151.0px;top:443.3px"><span style="">##.#</span></div>
<div class="nb" style="left:1250.7px;top:443.3px"><span style=";left:-6px">###</span></div>
<div class="nb" style="left:1351.6px;top:443.3px"><span style=";left:-6px">###</span></div>
<div class="nb" style="left:1051.7px;top:490.3px"><span style="">##.#</span></div>
<div class="nb" style="left:1151.0px;top:490.3px"><span style="">##.#</span></div>
<div class="nb" style="left:1250.7px;top:490.3px"><span style=";left:-6px">###</span></div>
<div class="nb" style="left:1351.6px;top:490.3px"><span style=";left:-6px">###</span></div>
<div class="nb" style="left:1051.7px;top:537.3px"><span style="">##.#</span></div>
<div class="nb" style="left:1151.0px;top:537.3px"><span style="">##.#</span></div>
<div class="nb" style="left:1250.7px;top:537.3px"><span style=";left:-6px">###</span></div>
<div class="nb" style="left:1351.6px;top:537.3px"><span style=";left:-6px">###</span></div>
<div class="nb" style="left:1051.7px;top:584.3px"><span style="">##.#</span></div>
<div class="nb" style="left:1151.0px;top:584.3px"><span style="">##.#</span></div>
<div class="nb" style="left:1250.7px;top:584.3px"><span style=";left:-6px">###</span></div>
<div class="nb" style="left:1351.6px;top:584.3px"><span style=";left:-6px">###</span></div>
<div class="nb" style="left:1051.7px;top:631.3px"><span style="">##.#</span></div>
<div class="nb" style="left:1151.0px;top:631.3px"><span style="">##.#</span></div>
<div class="nb" style="left:1250.7px;top:631.3px"><span style=";left:-6px">###</span></div>
<div class="nb" style="left:1351.6px;top:631.3px"><span style=";left:-6px">###</span></div>
<div class="nb" style="left:1051.7px;top:678.3px"><span style="">##.#</span></div>
<div class="nb" style="left:1151.0px;top:678.3px"><span style="">##.#</span></div>
<div class="nb" style="left:1250.7px;top:678.3px"><span style=";left:-6px">###</span></div>
<div class="nb" style="left:1351.6px;top:678.3px"><span style=";left:-6px">###</span></div>
<div class="nb" style="left:1051.7px;top:725.3px"><span style="">##.#</span></div>
<div class="nb" style="left:1151.0px;top:725.3px"><span style="">##.#</span></div>
<div class="nb" style="left:1250.7px;top:725.3px"><span style=";left:-6px">###</span></div>
<div class="nb" style="left:1351.6px;top:725.3px"><span style=";left:-6px">###</span></div>
<div class="nb" style="left:1051.7px;top:772.3px"><span style="">##.#</span></div>
<div class="nb" style="left:1151.0px;top:772.3px"><span style="">##.#</span></div>
<div class="nb" style="left:1250.7px;top:772.3px"><span style=";left:-6px">###</span></div>
<div class="nb" style="left:1351.6px;top:772.3px"><span style=";left:-6px">###</span></div>
</div>
<div class="abs" style="left:0;top:144.5px;width:208px;height:14px;background:linear-gradient(180deg,#cdd8e6,#c3d0e0)"></div>
<div class="abs" style="left:208px;top:144.5px;width:12.5px;height:14px;background:#e2e9f5"></div>
<div class="abs" style="left:0;top:144px;width:30px;height:10.5px;overflow:hidden"><span class="t" style="left:-11px;top:4.5px;font-size:15px;color:#222">性页</span></div>
<div class="abs" style="left:167px;top:152.3px;width:10px;height:1.6px;background:#222"></div>
<svg class="abs" style="left:188px;top:148.7px" width="14" height="9"><path d="M2.5,2 l4.5,4.5 l4.5,-4.5" stroke="#222" stroke-width="1.6" fill="none"/></svg>
<div class="abs" style="left:0;top:927px;width:187px;height:11px;background:#e4e4e4"></div>
<div class="abs" style="left:187px;top:927px;width:27px;height:11px;background:#f2f2f2"></div>
<div class="abs" style="left:213.5px;top:927px;width:7px;height:11px;background:#a9c4ea;border-left:1px solid #7fa3d6"></div>
<div class="abs" style="left:0.5px;top:154.5px;width:221px;height:773px;background:#f7f7f7;border-right:1.5px solid #4a4a4a;border-bottom:1.5px solid #6a6a6a;border-left:1px solid #d9d9d9;box-shadow:1px 1px 2px rgba(0,0,0,.25)"></div>
<div class="abs" style="left:5px;top:159px;width:212.5px;height:29.5px;background:#c1cedd"></div>
<span class="t" style="left:7.2px;top:167.3px;font-size:13.7px;font-weight:bold;color:#111">窗口预览</span>
<svg class="abs" style="left:200px;top:167px" width="14" height="14"><path d="M2.5,2.5 l9,9 m0,-9 l-9,9" stroke="#111" stroke-width="1.5" fill="none"/></svg>
<div class="abs" style="left:5px;top:188.5px;width:212.5px;height:708.5px;background:#fff;border:1px solid #aab7c6;overflow:hidden"></div>
<div class="abs" style="left:194px;top:189.5px;width:19.5px;height:707px;background:#f0f0f0"></div>
<div class="abs" style="left:194px;top:583px;width:19.5px;height:86.5px;background:#cdcdcd"></div>
<svg class="abs" style="left:197px;top:197px" width="14" height="10"><path d="M2,8 l5,-5 l5,5" stroke="#505050" stroke-width="1.8" fill="none"/></svg>
<svg class="abs" style="left:197px;top:879px" width="14" height="10"><path d="M2,2 l5,5 l5,-5" stroke="#505050" stroke-width="1.8" fill="none"/></svg>
<div class="abs" style="left:9px;top:340.5px;width:184px;height:72.5px;background:#0078d7;outline:1px dotted #f5b28a;outline-offset:-1px"></div>
<svg class="abs" style="left:47.3px;top:194px" width="74" height="55.5" viewBox="0 0 74 55.5"><rect width="74" height="55.5" fill="#2f9a86"/><rect width="74" height="6" fill="#35a890"/><rect x="1" y="0.5" width="20" height="4.2" fill="#3a55c8"/><rect x="3" y="1.6" width="15" height="1.8" fill="#e8f0ff"/><rect x="24" y="1" width="24" height="2.8" fill="#8fd66a" opacity=".85"/><rect x="50" y="2.5" width="24" height="2.2" fill="#3d62d8" opacity=".9"/><path d="M0,7 H46 L50,1.5" stroke="#7fffd4" stroke-width=".9" fill="none"/><rect x="0.7" y="7.6" width="72.6" height="43" fill="none" stroke="#7fffd4" stroke-width=".8"/><rect x="9" y="8.4" width="16" height="2" fill="#a6e2c0" opacity=".8"/><rect x="33" y="8.4" width="16" height="2" fill="#a6e2c0" opacity=".8"/><rect x="58" y="8.4" width="14" height="2" fill="#a6e2c0" opacity=".8"/><rect x="9.5" y="12.2" width="6.4" height="3.2" fill="#4a5fd0"/><rect x="10.3" y="12.8" width="4.8" height="1.5" fill="#f4f6ff"/><rect x="17.5" y="12.2" width="6.4" height="3.2" fill="#4a5fd0"/><rect x="18.3" y="12.8" width="4.8" height="1.5" fill="#f4f6ff"/><rect x="34.5" y="12.2" width="6.4" height="3.2" fill="#4a5fd0"/><rect x="35.3" y="12.8" width="4.8" height="1.5" fill="#f4f6ff"/><rect x="42.5" y="12.2" width="6.4" height="3.2" fill="#4a5fd0"/><rect x="43.3" y="12.8" width="4.8" height="1.5" fill="#f4f6ff"/><rect x="1.8" y="13.0" width="5" height="1.4" fill="#c8f0e4" opacity=".85"/><rect x="26.5" y="13.0" width="5.5" height="1.4" fill="#c8f0e4" opacity=".7"/><rect x="9.5" y="16.6" width="6.4" height="3.2" fill="#4a5fd0"/><rect x="10.3" y="17.2" width="4.8" height="1.5" fill="#f4f6ff"/><rect x="17.5" y="16.6" width="6.4" height="3.2" fill="#4a5fd0"/><rect x="18.3" y="17.2" width="4.8" height="1.5" fill="#f4f6ff"/><rect x="34.5" y="16.6" width="6.4" height="3.2" fill="#4a5fd0"/><rect x="35.3" y="17.2" width="4.8" height="1.5" fill="#f4f6ff"/><rect x="42.5" y="16.6" width="6.4" height="3.2" fill="#4a5fd0"/><rect x="43.3" y="17.2" width="4.8" height="1.5" fill="#f4f6ff"/><rect x="1.8" y="17.4" width="5" height="1.4" fill="#c8f0e4" opacity=".85"/><rect x="26.5" y="17.4" width="5.5" height="1.4" fill="#c8f0e4" opacity=".7"/><rect x="9.5" y="21.1" width="6.4" height="3.2" fill="#4a5fd0"/><rect x="10.3" y="21.7" width="4.8" height="1.5" fill="#f4f6ff"/><rect x="17.5" y="21.1" width="6.4" height="3.2" fill="#4a5fd0"/><rect x="18.3" y="21.7" width="4.8" height="1.5" fill="#f4f6ff"/><rect x="34.5" y="21.1" width="6.4" height="3.2" fill="#4a5fd0"/><rect x="35.3" y="21.7" width="4.8" height="1.5" fill="#f4f6ff"/><rect x="42.5" y="21.1" width="6.4" height="3.2" fill="#4a5fd0"/><rect x="43.3" y="21.7" width="4.8" height="1.5" fill="#f4f6ff"/><rect x="1.8" y="21.9" width="5" height="1.4" fill="#c8f0e4" opacity=".85"/><rect x="26.5" y="21.9" width="5.5" height="1.4" fill="#c8f0e4" opacity=".7"/><rect x="9.5" y="25.6" width="6.4" height="3.2" fill="#4a5fd0"/><rect x="10.3" y="26.2" width="4.8" height="1.5" fill="#f4f6ff"/><rect x="17.5" y="25.6" width="6.4" height="3.2" fill="#4a5fd0"/><rect x="18.3" y="26.2" width="4.8" height="1.5" fill="#f4f6ff"/><rect x="34.5" y="25.6" width="6.4" height="3.2" fill="#4a5fd0"/><rect x="35.3" y="26.2" width="4.8" height="1.5" fill="#f4f6ff"/><rect x="42.5" y="25.6" width="6.4" height="3.2" fill="#4a5fd0"/><rect x="43.3" y="26.2" width="4.8" height="1.5" fill="#f4f6ff"/><rect x="1.8" y="26.4" width="5" height="1.4" fill="#c8f0e4" opacity=".85"/><rect x="26.5" y="26.4" width="5.5" height="1.4" fill="#c8f0e4" opacity=".7"/><rect x="9.5" y="30.0" width="6.4" height="3.2" fill="#4a5fd0"/><rect x="10.3" y="30.6" width="4.8" height="1.5" fill="#f4f6ff"/><rect x="17.5" y="30.0" width="6.4" height="3.2" fill="#4a5fd0"/><rect x="18.3" y="30.6" width="4.8" height="1.5" fill="#f4f6ff"/><rect x="34.5" y="30.0" width="6.4" height="3.2" fill="#4a5fd0"/><rect x="35.3" y="30.6" width="4.8" height="1.5" fill="#f4f6ff"/><rect x="42.5" y="30.0" width="6.4" height="3.2" fill="#4a5fd0"/><rect x="43.3" y="30.6" width="4.8" height="1.5" fill="#f4f6ff"/><rect x="1.8" y="30.8" width="5" height="1.4" fill="#c8f0e4" opacity=".85"/><rect x="26.5" y="30.8" width="5.5" height="1.4" fill="#c8f0e4" opacity=".7"/><rect x="9.5" y="34.5" width="6.4" height="3.2" fill="#4a5fd0"/><rect x="10.3" y="35.1" width="4.8" height="1.5" fill="#f4f6ff"/><rect x="17.5" y="34.5" width="6.4" height="3.2" fill="#4a5fd0"/><rect x="18.3" y="35.1" width="4.8" height="1.5" fill="#f4f6ff"/><rect x="34.5" y="34.5" width="6.4" height="3.2" fill="#4a5fd0"/><rect x="35.3" y="35.1" width="4.8" height="1.5" fill="#f4f6ff"/><rect x="42.5" y="34.5" width="6.4" height="3.2" fill="#4a5fd0"/><rect x="43.3" y="35.1" width="4.8" height="1.5" fill="#f4f6ff"/><rect x="1.8" y="35.2" width="5" height="1.4" fill="#c8f0e4" opacity=".85"/><rect x="26.5" y="35.2" width="5.5" height="1.4" fill="#c8f0e4" opacity=".7"/><rect x="9.5" y="38.9" width="6.4" height="3.2" fill="#4a5fd0"/><rect x="10.3" y="39.5" width="4.8" height="1.5" fill="#f4f6ff"/><rect x="17.5" y="38.9" width="6.4" height="3.2" fill="#4a5fd0"/><rect x="18.3" y="39.5" width="4.8" height="1.5" fill="#f4f6ff"/><rect x="34.5" y="38.9" width="6.4" height="3.2" fill="#4a5fd0"/><rect x="35.3" y="39.5" width="4.8" height="1.5" fill="#f4f6ff"/><rect x="42.5" y="38.9" width="6.4" height="3.2" fill="#4a5fd0"/><rect x="43.3" y="39.5" width="4.8" height="1.5" fill="#f4f6ff"/><rect x="1.8" y="39.7" width="5" height="1.4" fill="#c8f0e4" opacity=".85"/><rect x="26.5" y="39.7" width="5.5" height="1.4" fill="#c8f0e4" opacity=".7"/><rect x="9.5" y="43.4" width="6.4" height="3.2" fill="#4a5fd0"/><rect x="10.3" y="44.0" width="4.8" height="1.5" fill="#f4f6ff"/><rect x="17.5" y="43.4" width="6.4" height="3.2" fill="#4a5fd0"/><rect x="18.3" y="44.0" width="4.8" height="1.5" fill="#f4f6ff"/><rect x="34.5" y="43.4" width="6.4" height="3.2" fill="#4a5fd0"/><rect x="35.3" y="44.0" width="4.8" height="1.5" fill="#f4f6ff"/><rect x="42.5" y="43.4" width="6.4" height="3.2" fill="#4a5fd0"/><rect x="43.3" y="44.0" width="4.8" height="1.5" fill="#f4f6ff"/><rect x="1.8" y="44.1" width="5" height="1.4" fill="#c8f0e4" opacity=".85"/><rect x="26.5" y="44.1" width="5.5" height="1.4" fill="#c8f0e4" opacity=".7"/><rect x="9.5" y="47.8" width="6.4" height="3.2" fill="#4a5fd0"/><rect x="10.3" y="48.4" width="4.8" height="1.5" fill="#f4f6ff"/><rect x="17.5" y="47.8" width="6.4" height="3.2" fill="#4a5fd0"/><rect x="18.3" y="48.4" width="4.8" height="1.5" fill="#f4f6ff"/><rect x="34.5" y="47.8" width="6.4" height="3.2" fill="#4a5fd0"/><rect x="35.3" y="48.4" width="4.8" height="1.5" fill="#f4f6ff"/><rect x="42.5" y="47.8" width="6.4" height="3.2" fill="#4a5fd0"/><rect x="43.3" y="48.4" width="4.8" height="1.5" fill="#f4f6ff"/><rect x="1.8" y="48.6" width="5" height="1.4" fill="#c8f0e4" opacity=".85"/><rect x="26.5" y="48.6" width="5.5" height="1.4" fill="#c8f0e4" opacity=".7"/><rect x="58.5" y="12.2" width="6.4" height="3.2" fill="#4a5fd0"/><rect x="59.3" y="12.8" width="4.8" height="1.5" fill="#f4f6ff"/><rect x="66.5" y="12.2" width="6.4" height="3.2" fill="#4a5fd0"/><rect x="67.3" y="12.8" width="4.8" height="1.5" fill="#f4f6ff"/><rect x="51.5" y="13.0" width="5" height="1.4" fill="#c8f0e4" opacity=".7"/><rect x="58.5" y="16.6" width="6.4" height="3.2" fill="#4a5fd0"/><rect x="59.3" y="17.2" width="4.8" height="1.5" fill="#f4f6ff"/><rect x="66.5" y="16.6" width="6.4" height="3.2" fill="#4a5fd0"/><rect x="67.3" y="17.2" width="4.8" height="1.5" fill="#f4f6ff"/><rect x="51.5" y="17.4" width="5" height="1.4" fill="#c8f0e4" opacity=".7"/><rect x="58.5" y="21.1" width="6.4" height="3.2" fill="#4a5fd0"/><rect x="59.3" y="21.7" width="4.8" height="1.5" fill="#f4f6ff"/><rect x="66.5" y="21.1" width="6.4" height="3.2" fill="#4a5fd0"/><rect x="67.3" y="21.7" width="4.8" height="1.5" fill="#f4f6ff"/><rect x="51.5" y="21.9" width="5" height="1.4" fill="#c8f0e4" opacity=".7"/><rect x="58.5" y="25.6" width="6.4" height="3.2" fill="#4a5fd0"/><rect x="59.3" y="26.2" width="4.8" height="1.5" fill="#f4f6ff"/><rect x="66.5" y="25.6" width="6.4" height="3.2" fill="#4a5fd0"/><rect x="67.3" y="26.2" width="4.8" height="1.5" fill="#f4f6ff"/><rect x="51.5" y="26.4" width="5" height="1.4" fill="#c8f0e4" opacity=".7"/><rect x="58.5" y="30.0" width="6.4" height="3.2" fill="#4a5fd0"/><rect x="59.3" y="30.6" width="4.8" height="1.5" fill="#f4f6ff"/><rect x="66.5" y="30.0" width="6.4" height="3.2" fill="#4a5fd0"/><rect x="67.3" y="30.6" width="4.8" height="1.5" fill="#f4f6ff"/><rect x="51.5" y="30.8" width="5" height="1.4" fill="#c8f0e4" opacity=".7"/><path d="M51,34.5 H73 M56.8,8 V34.5" stroke="#7fffd4" stroke-width=".6" opacity=".8"/><rect x="0" y="51.2" width="74" height="4.3" fill="#2fa080"/><rect x="1" y="52" width="18" height="2.4" fill="#9fe08a" opacity=".8"/><rect x="21" y="52" width="7" height="2.4" fill="#9fe08a" opacity=".8"/><rect x="30" y="52" width="26" height="2.4" fill="#9fe08a" opacity=".8"/><rect x="68" y="52" width="5" height="2.4" fill="#8fb0f0"/></svg>
<svg class="abs" style="left:47.3px;top:268px" width="74" height="55.5" viewBox="0 0 74 55.5"><rect width="74" height="55.5" fill="#2f9488"/><rect width="74" height="5" fill="#3fb08a"/><rect x="1" y="0.6" width="7.5" height="3.4" fill="#5b9de8"/><rect x="10" y="0.6" width="7" height="3.4" fill="#49b4d8"/><rect x="22" y="0.8" width="24" height="2.6" fill="#9ad86a" opacity=".8"/><rect x="48" y="2.2" width="26" height="2.6" fill="#4a6fe0" opacity=".85"/><path d="M0,6.2 H44 L48,1" stroke="#7fffd4" stroke-width=".9" fill="none"/><rect x="0.7" y="7" width="72.6" height="48" fill="none" stroke="#7fffd4" stroke-width=".8"/><rect x="8" y="8" width="28" height="2.4" fill="#86d79a" opacity=".8"/><rect x="44" y="8" width="28" height="2.4" fill="#86d79a" opacity=".8"/><rect x="8.3" y="10.9" width="6.6" height="2.9" fill="#4f5fd6"/><rect x="9.3" y="11.8" width="4.6" height="1.1" fill="#eef0ff"/><rect x="15.6" y="10.9" width="6.6" height="2.9" fill="#4f5fd6"/><rect x="16.6" y="11.8" width="4.6" height="1.1" fill="#eef0ff"/><rect x="22.8" y="10.9" width="6.6" height="2.9" fill="#4f5fd6"/><rect x="23.8" y="11.8" width="4.6" height="1.1" fill="#eef0ff"/><rect x="30.1" y="10.9" width="6.6" height="2.9" fill="#4f5fd6"/><rect x="31.1" y="11.8" width="4.6" height="1.1" fill="#eef0ff"/><rect x="2" y="11.5" width="4.5" height="1.3" fill="#bfeee0" opacity=".8"/><rect x="8.3" y="14.3" width="6.6" height="2.9" fill="#4f5fd6"/><rect x="9.3" y="15.2" width="4.6" height="1.1" fill="#eef0ff"/><rect x="15.6" y="14.3" width="6.6" height="2.9" fill="#4f5fd6"/><rect x="16.6" y="15.2" width="4.6" height="1.1" fill="#eef0ff"/><rect x="22.8" y="14.3" width="6.6" height="2.9" fill="#4f5fd6"/><rect x="23.8" y="15.2" width="4.6" height="1.1" fill="#eef0ff"/><rect x="30.1" y="14.3" width="6.6" height="2.9" fill="#4f5fd6"/><rect x="31.1" y="15.2" width="4.6" height="1.1" fill="#eef0ff"/><rect x="2" y="14.9" width="4.5" height="1.3" fill="#bfeee0" opacity=".8"/><rect x="8.3" y="17.7" width="6.6" height="2.9" fill="#4f5fd6"/><rect x="9.3" y="18.6" width="4.6" height="1.1" fill="#eef0ff"/><rect x="15.6" y="17.7" width="6.6" height="2.9" fill="#4f5fd6"/><rect x="16.6" y="18.6" width="4.6" height="1.1" fill="#eef0ff"/><rect x="22.8" y="17.7" width="6.6" height="2.9" fill="#4f5fd6"/><rect x="23.8" y="18.6" width="4.6" height="1.1" fill="#eef0ff"/><rect x="30.1" y="17.7" width="6.6" height="2.9" fill="#4f5fd6"/><rect x="31.1" y="18.6" width="4.6" height="1.1" fill="#eef0ff"/><rect x="2" y="18.3" width="4.5" height="1.3" fill="#bfeee0" opacity=".8"/><rect x="8.3" y="21.2" width="6.6" height="2.9" fill="#4f5fd6"/><rect x="9.3" y="22.1" width="4.6" height="1.1" fill="#eef0ff"/><rect x="15.6" y="21.2" width="6.6" height="2.9" fill="#4f5fd6"/><rect x="16.6" y="22.1" width="4.6" height="1.1" fill="#eef0ff"/><rect x="22.8" y="21.2" width="6.6" height="2.9" fill="#4f5fd6"/><rect x="23.8" y="22.1" width="4.6" height="1.1" fill="#eef0ff"/><rect x="30.1" y="21.2" width="6.6" height="2.9" fill="#4f5fd6"/><rect x="31.1" y="22.1" width="4.6" height="1.1" fill="#eef0ff"/><rect x="2" y="21.8" width="4.5" height="1.3" fill="#bfeee0" opacity=".8"/><rect x="8.3" y="24.6" width="6.6" height="2.9" fill="#4f5fd6"/><rect x="9.3" y="25.5" width="4.6" height="1.1" fill="#eef0ff"/><rect x="15.6" y="24.6" width="6.6" height="2.9" fill="#4f5fd6"/><rect x="16.6" y="25.5" width="4.6" height="1.1" fill="#eef0ff"/><rect x="22.8" y="24.6" width="6.6" height="2.9" fill="#4f5fd6"/><rect x="23.8" y="25.5" width="4.6" height="1.1" fill="#eef0ff"/><rect x="30.1" y="24.6" width="6.6" height="2.9" fill="#4f5fd6"/><rect x="31.1" y="25.5" width="4.6" height="1.1" fill="#eef0ff"/><rect x="2" y="25.2" width="4.5" height="1.3" fill="#bfeee0" opacity=".8"/><rect x="8.3" y="28.0" width="6.6" height="2.9" fill="#4f5fd6"/><rect x="9.3" y="28.9" width="4.6" height="1.1" fill="#eef0ff"/><rect x="15.6" y="28.0" width="6.6" height="2.9" fill="#4f5fd6"/><rect x="16.6" y="28.9" width="4.6" height="1.1" fill="#eef0ff"/><rect x="22.8" y="28.0" width="6.6" height="2.9" fill="#4f5fd6"/><rect x="23.8" y="28.9" width="4.6" height="1.1" fill="#eef0ff"/><rect x="30.1" y="28.0" width="6.6" height="2.9" fill="#4f5fd6"/><rect x="31.1" y="28.9" width="4.6" height="1.1" fill="#eef0ff"/><rect x="2" y="28.6" width="4.5" height="1.3" fill="#bfeee0" opacity=".8"/><rect x="8.3" y="31.4" width="6.6" height="2.9" fill="#4f5fd6"/><rect x="9.3" y="32.3" width="4.6" height="1.1" fill="#eef0ff"/><rect x="15.6" y="31.4" width="6.6" height="2.9" fill="#4f5fd6"/><rect x="16.6" y="32.3" width="4.6" height="1.1" fill="#eef0ff"/><rect x="22.8" y="31.4" width="6.6" height="2.9" fill="#4f5fd6"/><rect x="23.8" y="32.3" width="4.6" height="1.1" fill="#eef0ff"/><rect x="30.1" y="31.4" width="6.6" height="2.9" fill="#4f5fd6"/><rect x="31.1" y="32.3" width="4.6" height="1.1" fill="#eef0ff"/><rect x="2" y="32.0" width="4.5" height="1.3" fill="#bfeee0" opacity=".8"/><rect x="8.3" y="34.8" width="6.6" height="2.9" fill="#4f5fd6"/><rect x="9.3" y="35.7" width="4.6" height="1.1" fill="#eef0ff"/><rect x="15.6" y="34.8" width="6.6" height="2.9" fill="#4f5fd6"/><rect x="16.6" y="35.7" width="4.6" height="1.1" fill="#eef0ff"/><rect x="22.8" y="34.8" width="6.6" height="2.9" fill="#4f5fd6"/><rect x="23.8" y="35.7" width="4.6" height="1.1" fill="#eef0ff"/><rect x="30.1" y="34.8" width="6.6" height="2.9" fill="#4f5fd6"/><rect x="31.1" y="35.7" width="4.6" height="1.1" fill="#eef0ff"/><rect x="2" y="35.4" width="4.5" height="1.3" fill="#bfeee0" opacity=".8"/><rect x="8.3" y="38.3" width="6.6" height="2.9" fill="#4f5fd6"/><rect x="9.3" y="39.2" width="4.6" height="1.1" fill="#eef0ff"/><rect x="15.6" y="38.3" width="6.6" height="2.9" fill="#4f5fd6"/><rect x="16.6" y="39.2" width="4.6" height="1.1" fill="#eef0ff"/><rect x="22.8" y="38.3" width="6.6" height="2.9" fill="#4f5fd6"/><rect x="23.8" y="39.2" width="4.6" height="1.1" fill="#eef0ff"/><rect x="30.1" y="38.3" width="6.6" height="2.9" fill="#4f5fd6"/><rect x="31.1" y="39.2" width="4.6" height="1.1" fill="#eef0ff"/><rect x="2" y="38.9" width="4.5" height="1.3" fill="#bfeee0" opacity=".8"/><rect x="8.3" y="41.7" width="6.6" height="2.9" fill="#4f5fd6"/><rect x="9.3" y="42.6" width="4.6" height="1.1" fill="#eef0ff"/><rect x="15.6" y="41.7" width="6.6" height="2.9" fill="#4f5fd6"/><rect x="16.6" y="42.6" width="4.6" height="1.1" fill="#eef0ff"/><rect x="22.8" y="41.7" width="6.6" height="2.9" fill="#4f5fd6"/><rect x="23.8" y="42.6" width="4.6" height="1.1" fill="#eef0ff"/><rect x="30.1" y="41.7" width="6.6" height="2.9" fill="#4f5fd6"/><rect x="31.1" y="42.6" width="4.6" height="1.1" fill="#eef0ff"/><rect x="2" y="42.3" width="4.5" height="1.3" fill="#bfeee0" opacity=".8"/><rect x="8.3" y="45.1" width="6.6" height="2.9" fill="#4f5fd6"/><rect x="9.3" y="46.0" width="4.6" height="1.1" fill="#eef0ff"/><rect x="15.6" y="45.1" width="6.6" height="2.9" fill="#4f5fd6"/><rect x="16.6" y="46.0" width="4.6" height="1.1" fill="#eef0ff"/><rect x="22.8" y="45.1" width="6.6" height="2.9" fill="#4f5fd6"/><rect x="23.8" y="46.0" width="4.6" height="1.1" fill="#eef0ff"/><rect x="30.1" y="45.1" width="6.6" height="2.9" fill="#4f5fd6"/><rect x="31.1" y="46.0" width="4.6" height="1.1" fill="#eef0ff"/><rect x="2" y="45.7" width="4.5" height="1.3" fill="#bfeee0" opacity=".8"/><rect x="8.3" y="48.5" width="6.6" height="2.9" fill="#4f5fd6"/><rect x="9.3" y="49.4" width="4.6" height="1.1" fill="#eef0ff"/><rect x="15.6" y="48.5" width="6.6" height="2.9" fill="#4f5fd6"/><rect x="16.6" y="49.4" width="4.6" height="1.1" fill="#eef0ff"/><rect x="22.8" y="48.5" width="6.6" height="2.9" fill="#4f5fd6"/><rect x="23.8" y="49.4" width="4.6" height="1.1" fill="#eef0ff"/><rect x="30.1" y="48.5" width="6.6" height="2.9" fill="#4f5fd6"/><rect x="31.1" y="49.4" width="4.6" height="1.1" fill="#eef0ff"/><rect x="2" y="49.1" width="4.5" height="1.3" fill="#bfeee0" opacity=".8"/><rect x="8.3" y="51.9" width="6.6" height="2.9" fill="#4f5fd6"/><rect x="9.3" y="52.8" width="4.6" height="1.1" fill="#eef0ff"/><rect x="15.6" y="51.9" width="6.6" height="2.9" fill="#4f5fd6"/><rect x="16.6" y="52.8" width="4.6" height="1.1" fill="#eef0ff"/><rect x="22.8" y="51.9" width="6.6" height="2.9" fill="#4f5fd6"/><rect x="23.8" y="52.8" width="4.6" height="1.1" fill="#eef0ff"/><rect x="30.1" y="51.9" width="6.6" height="2.9" fill="#4f5fd6"/><rect x="31.1" y="52.8" width="4.6" height="1.1" fill="#eef0ff"/><rect x="2" y="52.5" width="4.5" height="1.3" fill="#bfeee0" opacity=".8"/><rect x="44.6" y="10.9" width="6.6" height="2.9" fill="#4f5fd6"/><rect x="45.6" y="11.8" width="4.6" height="1.1" fill="#eef0ff"/><rect x="51.9" y="10.9" width="6.6" height="2.9" fill="#4f5fd6"/><rect x="52.9" y="11.8" width="4.6" height="1.1" fill="#eef0ff"/><rect x="59.1" y="10.9" width="6.6" height="2.9" fill="#4f5fd6"/><rect x="60.1" y="11.8" width="4.6" height="1.1" fill="#eef0ff"/><rect x="66.3" y="10.9" width="6.6" height="2.9" fill="#4f5fd6"/><rect x="67.3" y="11.8" width="4.6" height="1.1" fill="#eef0ff"/><rect x="38" y="11.5" width="5" height="1.3" fill="#bfeee0" opacity=".8"/><rect x="44.6" y="14.3" width="6.6" height="2.9" fill="#4f5fd6"/><rect x="45.6" y="15.2" width="4.6" height="1.1" fill="#eef0ff"/><rect x="51.9" y="14.3" width="6.6" height="2.9" fill="#4f5fd6"/><rect x="52.9" y="15.2" width="4.6" height="1.1" fill="#eef0ff"/><rect x="59.1" y="14.3" width="6.6" height="2.9" fill="#4f5fd6"/><rect x="60.1" y="15.2" width="4.6" height="1.1" fill="#eef0ff"/><rect x="66.3" y="14.3" width="6.6" height="2.9" fill="#4f5fd6"/><rect x="67.3" y="15.2" width="4.6" height="1.1" fill="#eef0ff"/><rect x="38" y="14.9" width="5" height="1.3" fill="#bfeee0" opacity=".8"/><rect x="44.6" y="17.7" width="6.6" height="2.9" fill="#4f5fd6"/><rect x="45.6" y="18.6" width="4.6" height="1.1" fill="#eef0ff"/><rect x="51.9" y="17.7" width="6.6" height="2.9" fill="#4f5fd6"/><rect x="52.9" y="18.6" width="4.6" height="1.1" fill="#eef0ff"/><rect x="59.1" y="17.7" width="6.6" height="2.9" fill="#4f5fd6"/><rect x="60.1" y="18.6" width="4.6" height="1.1" fill="#eef0ff"/><rect x="66.3" y="17.7" width="6.6" height="2.9" fill="#4f5fd6"/><rect x="67.3" y="18.6" width="4.6" height="1.1" fill="#eef0ff"/><rect x="38" y="18.3" width="5" height="1.3" fill="#bfeee0" opacity=".8"/><rect x="44.6" y="21.2" width="6.6" height="2.9" fill="#4f5fd6"/><rect x="45.6" y="22.1" width="4.6" height="1.1" fill="#eef0ff"/><rect x="51.9" y="21.2" width="6.6" height="2.9" fill="#4f5fd6"/><rect x="52.9" y="22.1" width="4.6" height="1.1" fill="#eef0ff"/><rect x="59.1" y="21.2" width="6.6" height="2.9" fill="#4f5fd6"/><rect x="60.1" y="22.1" width="4.6" height="1.1" fill="#eef0ff"/><rect x="66.3" y="21.2" width="6.6" height="2.9" fill="#4f5fd6"/><rect x="67.3" y="22.1" width="4.6" height="1.1" fill="#eef0ff"/><rect x="38" y="21.8" width="5" height="1.3" fill="#bfeee0" opacity=".8"/><rect x="44.6" y="24.6" width="6.6" height="2.9" fill="#4f5fd6"/><rect x="45.6" y="25.5" width="4.6" height="1.1" fill="#eef0ff"/><rect x="51.9" y="24.6" width="6.6" height="2.9" fill="#4f5fd6"/><rect x="52.9" y="25.5" width="4.6" height="1.1" fill="#eef0ff"/><rect x="59.1" y="24.6" width="6.6" height="2.9" fill="#4f5fd6"/><rect x="60.1" y="25.5" width="4.6" height="1.1" fill="#eef0ff"/><rect x="66.3" y="24.6" width="6.6" height="2.9" fill="#4f5fd6"/><rect x="67.3" y="25.5" width="4.6" height="1.1" fill="#eef0ff"/><rect x="38" y="25.2" width="5" height="1.3" fill="#bfeee0" opacity=".8"/><rect x="44.6" y="28.0" width="6.6" height="2.9" fill="#4f5fd6"/><rect x="45.6" y="28.9" width="4.6" height="1.1" fill="#eef0ff"/><rect x="51.9" y="28.0" width="6.6" height="2.9" fill="#4f5fd6"/><rect x="52.9" y="28.9" width="4.6" height="1.1" fill="#eef0ff"/><rect x="59.1" y="28.0" width="6.6" height="2.9" fill="#4f5fd6"/><rect x="60.1" y="28.9" width="4.6" height="1.1" fill="#eef0ff"/><rect x="66.3" y="28.0" width="6.6" height="2.9" fill="#4f5fd6"/><rect x="67.3" y="28.9" width="4.6" height="1.1" fill="#eef0ff"/><rect x="38" y="28.6" width="5" height="1.3" fill="#bfeee0" opacity=".8"/><rect x="44.6" y="31.4" width="6.6" height="2.9" fill="#4f5fd6"/><rect x="45.6" y="32.3" width="4.6" height="1.1" fill="#eef0ff"/><rect x="51.9" y="31.4" width="6.6" height="2.9" fill="#4f5fd6"/><rect x="52.9" y="32.3" width="4.6" height="1.1" fill="#eef0ff"/><rect x="59.1" y="31.4" width="6.6" height="2.9" fill="#4f5fd6"/><rect x="60.1" y="32.3" width="4.6" height="1.1" fill="#eef0ff"/><rect x="66.3" y="31.4" width="6.6" height="2.9" fill="#4f5fd6"/><rect x="67.3" y="32.3" width="4.6" height="1.1" fill="#eef0ff"/><rect x="38" y="32.0" width="5" height="1.3" fill="#bfeee0" opacity=".8"/><rect x="44.6" y="34.8" width="6.6" height="2.9" fill="#4f5fd6"/><rect x="45.6" y="35.7" width="4.6" height="1.1" fill="#eef0ff"/><rect x="51.9" y="34.8" width="6.6" height="2.9" fill="#4f5fd6"/><rect x="52.9" y="35.7" width="4.6" height="1.1" fill="#eef0ff"/><rect x="59.1" y="34.8" width="6.6" height="2.9" fill="#4f5fd6"/><rect x="60.1" y="35.7" width="4.6" height="1.1" fill="#eef0ff"/><rect x="66.3" y="34.8" width="6.6" height="2.9" fill="#4f5fd6"/><rect x="67.3" y="35.7" width="4.6" height="1.1" fill="#eef0ff"/><rect x="38" y="35.4" width="5" height="1.3" fill="#bfeee0" opacity=".8"/><rect x="44.6" y="38.3" width="6.6" height="2.9" fill="#4f5fd6"/><rect x="45.6" y="39.2" width="4.6" height="1.1" fill="#eef0ff"/><rect x="51.9" y="38.3" width="6.6" height="2.9" fill="#4f5fd6"/><rect x="52.9" y="39.2" width="4.6" height="1.1" fill="#eef0ff"/><rect x="59.1" y="38.3" width="6.6" height="2.9" fill="#4f5fd6"/><rect x="60.1" y="39.2" width="4.6" height="1.1" fill="#eef0ff"/><rect x="66.3" y="38.3" width="6.6" height="2.9" fill="#4f5fd6"/><rect x="67.3" y="39.2" width="4.6" height="1.1" fill="#eef0ff"/><rect x="38" y="38.9" width="5" height="1.3" fill="#bfeee0" opacity=".8"/><rect x="44.6" y="41.7" width="6.6" height="2.9" fill="#4f5fd6"/><rect x="45.6" y="42.6" width="4.6" height="1.1" fill="#eef0ff"/><rect x="51.9" y="41.7" width="6.6" height="2.9" fill="#4f5fd6"/><rect x="52.9" y="42.6" width="4.6" height="1.1" fill="#eef0ff"/><rect x="59.1" y="41.7" width="6.6" height="2.9" fill="#4f5fd6"/><rect x="60.1" y="42.6" width="4.6" height="1.1" fill="#eef0ff"/><rect x="66.3" y="41.7" width="6.6" height="2.9" fill="#4f5fd6"/><rect x="67.3" y="42.6" width="4.6" height="1.1" fill="#eef0ff"/><rect x="38" y="42.3" width="5" height="1.3" fill="#bfeee0" opacity=".8"/><path d="M37.5,45.5 H73" stroke="#7fffd4" stroke-width=".7"/><path d="M37.3,7 V55" stroke="#7fffd4" stroke-width=".5" opacity=".7"/></svg>
<svg class="abs" style="left:47.3px;top:342px" width="74" height="55.5" viewBox="0 0 74 55.5"><rect width="74" height="55.5" fill="#2f9488"/><rect width="74" height="5" fill="#3fb08a"/><rect x="1" y="0.6" width="7.5" height="3.4" fill="#5b9de8"/><rect x="10" y="0.6" width="7" height="3.4" fill="#49b4d8"/><rect x="22" y="0.8" width="24" height="2.6" fill="#9ad86a" opacity=".8"/><rect x="48" y="2.2" width="26" height="2.6" fill="#4a6fe0" opacity=".85"/><path d="M0,6.2 H44 L48,1" stroke="#7fffd4" stroke-width=".9" fill="none"/><rect x="0.7" y="7" width="72.6" height="48" fill="none" stroke="#7fffd4" stroke-width=".8"/><rect x="8" y="8" width="28" height="2.4" fill="#86d79a" opacity=".8"/><rect x="44" y="8" width="28" height="2.4" fill="#86d79a" opacity=".8"/><rect x="8.3" y="10.9" width="6.6" height="2.9" fill="#4f5fd6"/><rect x="9.3" y="11.8" width="4.6" height="1.1" fill="#eef0ff"/><rect x="15.6" y="10.9" width="6.6" height="2.9" fill="#4f5fd6"/><rect x="16.6" y="11.8" width="4.6" height="1.1" fill="#eef0ff"/><rect x="22.8" y="10.9" width="6.6" height="2.9" fill="#4f5fd6"/><rect x="23.8" y="11.8" width="4.6" height="1.1" fill="#eef0ff"/><rect x="30.1" y="10.9" width="6.6" height="2.9" fill="#4f5fd6"/><rect x="31.1" y="11.8" width="4.6" height="1.1" fill="#eef0ff"/><rect x="2" y="11.5" width="4.5" height="1.3" fill="#bfeee0" opacity=".8"/><rect x="8.3" y="14.3" width="6.6" height="2.9" fill="#4f5fd6"/><rect x="9.3" y="15.2" width="4.6" height="1.1" fill="#eef0ff"/><rect x="15.6" y="14.3" width="6.6" height="2.9" fill="#4f5fd6"/><rect x="16.6" y="15.2" width="4.6" height="1.1" fill="#eef0ff"/><rect x="22.8" y="14.3" width="6.6" height="2.9" fill="#4f5fd6"/><rect x="23.8" y="15.2" width="4.6" height="1.1" fill="#eef0ff"/><rect x="30.1" y="14.3" width="6.6" height="2.9" fill="#4f5fd6"/><rect x="31.1" y="15.2" width="4.6" height="1.1" fill="#eef0ff"/><rect x="2" y="14.9" width="4.5" height="1.3" fill="#bfeee0" opacity=".8"/><rect x="8.3" y="17.7" width="6.6" height="2.9" fill="#4f5fd6"/><rect x="9.3" y="18.6" width="4.6" height="1.1" fill="#eef0ff"/><rect x="15.6" y="17.7" width="6.6" height="2.9" fill="#4f5fd6"/><rect x="16.6" y="18.6" width="4.6" height="1.1" fill="#eef0ff"/><rect x="22.8" y="17.7" width="6.6" height="2.9" fill="#4f5fd6"/><rect x="23.8" y="18.6" width="4.6" height="1.1" fill="#eef0ff"/><rect x="30.1" y="17.7" width="6.6" height="2.9" fill="#4f5fd6"/><rect x="31.1" y="18.6" width="4.6" height="1.1" fill="#eef0ff"/><rect x="2" y="18.3" width="4.5" height="1.3" fill="#bfeee0" opacity=".8"/><rect x="8.3" y="21.2" width="6.6" height="2.9" fill="#4f5fd6"/><rect x="9.3" y="22.1" width="4.6" height="1.1" fill="#eef0ff"/><rect x="15.6" y="21.2" width="6.6" height="2.9" fill="#4f5fd6"/><rect x="16.6" y="22.1" width="4.6" height="1.1" fill="#eef0ff"/><rect x="22.8" y="21.2" width="6.6" height="2.9" fill="#4f5fd6"/><rect x="23.8" y="22.1" width="4.6" height="1.1" fill="#eef0ff"/><rect x="30.1" y="21.2" width="6.6" height="2.9" fill="#4f5fd6"/><rect x="31.1" y="22.1" width="4.6" height="1.1" fill="#eef0ff"/><rect x="2" y="21.8" width="4.5" height="1.3" fill="#bfeee0" opacity=".8"/><rect x="8.3" y="24.6" width="6.6" height="2.9" fill="#4f5fd6"/><rect x="9.3" y="25.5" width="4.6" height="1.1" fill="#eef0ff"/><rect x="15.6" y="24.6" width="6.6" height="2.9" fill="#4f5fd6"/><rect x="16.6" y="25.5" width="4.6" height="1.1" fill="#eef0ff"/><rect x="22.8" y="24.6" width="6.6" height="2.9" fill="#4f5fd6"/><rect x="23.8" y="25.5" width="4.6" height="1.1" fill="#eef0ff"/><rect x="30.1" y="24.6" width="6.6" height="2.9" fill="#4f5fd6"/><rect x="31.1" y="25.5" width="4.6" height="1.1" fill="#eef0ff"/><rect x="2" y="25.2" width="4.5" height="1.3" fill="#bfeee0" opacity=".8"/><rect x="8.3" y="28.0" width="6.6" height="2.9" fill="#4f5fd6"/><rect x="9.3" y="28.9" width="4.6" height="1.1" fill="#eef0ff"/><rect x="15.6" y="28.0" width="6.6" height="2.9" fill="#4f5fd6"/><rect x="16.6" y="28.9" width="4.6" height="1.1" fill="#eef0ff"/><rect x="22.8" y="28.0" width="6.6" height="2.9" fill="#4f5fd6"/><rect x="23.8" y="28.9" width="4.6" height="1.1" fill="#eef0ff"/><rect x="30.1" y="28.0" width="6.6" height="2.9" fill="#4f5fd6"/><rect x="31.1" y="28.9" width="4.6" height="1.1" fill="#eef0ff"/><rect x="2" y="28.6" width="4.5" height="1.3" fill="#bfeee0" opacity=".8"/><rect x="8.3" y="31.4" width="6.6" height="2.9" fill="#4f5fd6"/><rect x="9.3" y="32.3" width="4.6" height="1.1" fill="#eef0ff"/><rect x="15.6" y="31.4" width="6.6" height="2.9" fill="#4f5fd6"/><rect x="16.6" y="32.3" width="4.6" height="1.1" fill="#eef0ff"/><rect x="22.8" y="31.4" width="6.6" height="2.9" fill="#4f5fd6"/><rect x="23.8" y="32.3" width="4.6" height="1.1" fill="#eef0ff"/><rect x="30.1" y="31.4" width="6.6" height="2.9" fill="#4f5fd6"/><rect x="31.1" y="32.3" width="4.6" height="1.1" fill="#eef0ff"/><rect x="2" y="32.0" width="4.5" height="1.3" fill="#bfeee0" opacity=".8"/><rect x="8.3" y="34.8" width="6.6" height="2.9" fill="#4f5fd6"/><rect x="9.3" y="35.7" width="4.6" height="1.1" fill="#eef0ff"/><rect x="15.6" y="34.8" width="6.6" height="2.9" fill="#4f5fd6"/><rect x="16.6" y="35.7" width="4.6" height="1.1" fill="#eef0ff"/><rect x="22.8" y="34.8" width="6.6" height="2.9" fill="#4f5fd6"/><rect x="23.8" y="35.7" width="4.6" height="1.1" fill="#eef0ff"/><rect x="30.1" y="34.8" width="6.6" height="2.9" fill="#4f5fd6"/><rect x="31.1" y="35.7" width="4.6" height="1.1" fill="#eef0ff"/><rect x="2" y="35.4" width="4.5" height="1.3" fill="#bfeee0" opacity=".8"/><rect x="8.3" y="38.3" width="6.6" height="2.9" fill="#4f5fd6"/><rect x="9.3" y="39.2" width="4.6" height="1.1" fill="#eef0ff"/><rect x="15.6" y="38.3" width="6.6" height="2.9" fill="#4f5fd6"/><rect x="16.6" y="39.2" width="4.6" height="1.1" fill="#eef0ff"/><rect x="22.8" y="38.3" width="6.6" height="2.9" fill="#4f5fd6"/><rect x="23.8" y="39.2" width="4.6" height="1.1" fill="#eef0ff"/><rect x="30.1" y="38.3" width="6.6" height="2.9" fill="#4f5fd6"/><rect x="31.1" y="39.2" width="4.6" height="1.1" fill="#eef0ff"/><rect x="2" y="38.9" width="4.5" height="1.3" fill="#bfeee0" opacity=".8"/><rect x="8.3" y="41.7" width="6.6" height="2.9" fill="#4f5fd6"/><rect x="9.3" y="42.6" width="4.6" height="1.1" fill="#eef0ff"/><rect x="15.6" y="41.7" width="6.6" height="2.9" fill="#4f5fd6"/><rect x="16.6" y="42.6" width="4.6" height="1.1" fill="#eef0ff"/><rect x="22.8" y="41.7" width="6.6" height="2.9" fill="#4f5fd6"/><rect x="23.8" y="42.6" width="4.6" height="1.1" fill="#eef0ff"/><rect x="30.1" y="41.7" width="6.6" height="2.9" fill="#4f5fd6"/><rect x="31.1" y="42.6" width="4.6" height="1.1" fill="#eef0ff"/><rect x="2" y="42.3" width="4.5" height="1.3" fill="#bfeee0" opacity=".8"/><rect x="8.3" y="45.1" width="6.6" height="2.9" fill="#4f5fd6"/><rect x="9.3" y="46.0" width="4.6" height="1.1" fill="#eef0ff"/><rect x="15.6" y="45.1" width="6.6" height="2.9" fill="#4f5fd6"/><rect x="16.6" y="46.0" width="4.6" height="1.1" fill="#eef0ff"/><rect x="22.8" y="45.1" width="6.6" height="2.9" fill="#4f5fd6"/><rect x="23.8" y="46.0" width="4.6" height="1.1" fill="#eef0ff"/><rect x="30.1" y="45.1" width="6.6" height="2.9" fill="#4f5fd6"/><rect x="31.1" y="46.0" width="4.6" height="1.1" fill="#eef0ff"/><rect x="2" y="45.7" width="4.5" height="1.3" fill="#bfeee0" opacity=".8"/><rect x="8.3" y="48.5" width="6.6" height="2.9" fill="#4f5fd6"/><rect x="9.3" y="49.4" width="4.6" height="1.1" fill="#eef0ff"/><rect x="15.6" y="48.5" width="6.6" height="2.9" fill="#4f5fd6"/><rect x="16.6" y="49.4" width="4.6" height="1.1" fill="#eef0ff"/><rect x="22.8" y="48.5" width="6.6" height="2.9" fill="#4f5fd6"/><rect x="23.8" y="49.4" width="4.6" height="1.1" fill="#eef0ff"/><rect x="30.1" y="48.5" width="6.6" height="2.9" fill="#4f5fd6"/><rect x="31.1" y="49.4" width="4.6" height="1.1" fill="#eef0ff"/><rect x="2" y="49.1" width="4.5" height="1.3" fill="#bfeee0" opacity=".8"/><rect x="8.3" y="51.9" width="6.6" height="2.9" fill="#4f5fd6"/><rect x="9.3" y="52.8" width="4.6" height="1.1" fill="#eef0ff"/><rect x="15.6" y="51.9" width="6.6" height="2.9" fill="#4f5fd6"/><rect x="16.6" y="52.8" width="4.6" height="1.1" fill="#eef0ff"/><rect x="22.8" y="51.9" width="6.6" height="2.9" fill="#4f5fd6"/><rect x="23.8" y="52.8" width="4.6" height="1.1" fill="#eef0ff"/><rect x="30.1" y="51.9" width="6.6" height="2.9" fill="#4f5fd6"/><rect x="31.1" y="52.8" width="4.6" height="1.1" fill="#eef0ff"/><rect x="2" y="52.5" width="4.5" height="1.3" fill="#bfeee0" opacity=".8"/><rect x="44.6" y="10.9" width="6.6" height="2.9" fill="#4f5fd6"/><rect x="45.6" y="11.8" width="4.6" height="1.1" fill="#eef0ff"/><rect x="51.9" y="10.9" width="6.6" height="2.9" fill="#4f5fd6"/><rect x="52.9" y="11.8" width="4.6" height="1.1" fill="#eef0ff"/><rect x="59.1" y="10.9" width="6.6" height="2.9" fill="#4f5fd6"/><rect x="60.1" y="11.8" width="4.6" height="1.1" fill="#eef0ff"/><rect x="66.3" y="10.9" width="6.6" height="2.9" fill="#4f5fd6"/><rect x="67.3" y="11.8" width="4.6" height="1.1" fill="#eef0ff"/><rect x="38" y="11.5" width="5" height="1.3" fill="#bfeee0" opacity=".8"/><rect x="44.6" y="14.3" width="6.6" height="2.9" fill="#4f5fd6"/><rect x="45.6" y="15.2" width="4.6" height="1.1" fill="#eef0ff"/><rect x="51.9" y="14.3" width="6.6" height="2.9" fill="#4f5fd6"/><rect x="52.9" y="15.2" width="4.6" height="1.1" fill="#eef0ff"/><rect x="59.1" y="14.3" width="6.6" height="2.9" fill="#4f5fd6"/><rect x="60.1" y="15.2" width="4.6" height="1.1" fill="#eef0ff"/><rect x="66.3" y="14.3" width="6.6" height="2.9" fill="#4f5fd6"/><rect x="67.3" y="15.2" width="4.6" height="1.1" fill="#eef0ff"/><rect x="38" y="14.9" width="5" height="1.3" fill="#bfeee0" opacity=".8"/><rect x="44.6" y="17.7" width="6.6" height="2.9" fill="#4f5fd6"/><rect x="45.6" y="18.6" width="4.6" height="1.1" fill="#eef0ff"/><rect x="51.9" y="17.7" width="6.6" height="2.9" fill="#4f5fd6"/><rect x="52.9" y="18.6" width="4.6" height="1.1" fill="#eef0ff"/><rect x="59.1" y="17.7" width="6.6" height="2.9" fill="#4f5fd6"/><rect x="60.1" y="18.6" width="4.6" height="1.1" fill="#eef0ff"/><rect x="66.3" y="17.7" width="6.6" height="2.9" fill="#4f5fd6"/><rect x="67.3" y="18.6" width="4.6" height="1.1" fill="#eef0ff"/><rect x="38" y="18.3" width="5" height="1.3" fill="#bfeee0" opacity=".8"/><rect x="44.6" y="21.2" width="6.6" height="2.9" fill="#4f5fd6"/><rect x="45.6" y="22.1" width="4.6" height="1.1" fill="#eef0ff"/><rect x="51.9" y="21.2" width="6.6" height="2.9" fill="#4f5fd6"/><rect x="52.9" y="22.1" width="4.6" height="1.1" fill="#eef0ff"/><rect x="59.1" y="21.2" width="6.6" height="2.9" fill="#4f5fd6"/><rect x="60.1" y="22.1" width="4.6" height="1.1" fill="#eef0ff"/><rect x="66.3" y="21.2" width="6.6" height="2.9" fill="#4f5fd6"/><rect x="67.3" y="22.1" width="4.6" height="1.1" fill="#eef0ff"/><rect x="38" y="21.8" width="5" height="1.3" fill="#bfeee0" opacity=".8"/><rect x="44.6" y="24.6" width="6.6" height="2.9" fill="#4f5fd6"/><rect x="45.6" y="25.5" width="4.6" height="1.1" fill="#eef0ff"/><rect x="51.9" y="24.6" width="6.6" height="2.9" fill="#4f5fd6"/><rect x="52.9" y="25.5" width="4.6" height="1.1" fill="#eef0ff"/><rect x="59.1" y="24.6" width="6.6" height="2.9" fill="#4f5fd6"/><rect x="60.1" y="25.5" width="4.6" height="1.1" fill="#eef0ff"/><rect x="66.3" y="24.6" width="6.6" height="2.9" fill="#4f5fd6"/><rect x="67.3" y="25.5" width="4.6" height="1.1" fill="#eef0ff"/><rect x="38" y="25.2" width="5" height="1.3" fill="#bfeee0" opacity=".8"/><rect x="44.6" y="28.0" width="6.6" height="2.9" fill="#4f5fd6"/><rect x="45.6" y="28.9" width="4.6" height="1.1" fill="#eef0ff"/><rect x="51.9" y="28.0" width="6.6" height="2.9" fill="#4f5fd6"/><rect x="52.9" y="28.9" width="4.6" height="1.1" fill="#eef0ff"/><rect x="59.1" y="28.0" width="6.6" height="2.9" fill="#4f5fd6"/><rect x="60.1" y="28.9" width="4.6" height="1.1" fill="#eef0ff"/><rect x="66.3" y="28.0" width="6.6" height="2.9" fill="#4f5fd6"/><rect x="67.3" y="28.9" width="4.6" height="1.1" fill="#eef0ff"/><rect x="38" y="28.6" width="5" height="1.3" fill="#bfeee0" opacity=".8"/><rect x="44.6" y="31.4" width="6.6" height="2.9" fill="#4f5fd6"/><rect x="45.6" y="32.3" width="4.6" height="1.1" fill="#eef0ff"/><rect x="51.9" y="31.4" width="6.6" height="2.9" fill="#4f5fd6"/><rect x="52.9" y="32.3" width="4.6" height="1.1" fill="#eef0ff"/><rect x="59.1" y="31.4" width="6.6" height="2.9" fill="#4f5fd6"/><rect x="60.1" y="32.3" width="4.6" height="1.1" fill="#eef0ff"/><rect x="66.3" y="31.4" width="6.6" height="2.9" fill="#4f5fd6"/><rect x="67.3" y="32.3" width="4.6" height="1.1" fill="#eef0ff"/><rect x="38" y="32.0" width="5" height="1.3" fill="#bfeee0" opacity=".8"/><rect x="44.6" y="34.8" width="6.6" height="2.9" fill="#4f5fd6"/><rect x="45.6" y="35.7" width="4.6" height="1.1" fill="#eef0ff"/><rect x="51.9" y="34.8" width="6.6" height="2.9" fill="#4f5fd6"/><rect x="52.9" y="35.7" width="4.6" height="1.1" fill="#eef0ff"/><rect x="59.1" y="34.8" width="6.6" height="2.9" fill="#4f5fd6"/><rect x="60.1" y="35.7" width="4.6" height="1.1" fill="#eef0ff"/><rect x="66.3" y="34.8" width="6.6" height="2.9" fill="#4f5fd6"/><rect x="67.3" y="35.7" width="4.6" height="1.1" fill="#eef0ff"/><rect x="38" y="35.4" width="5" height="1.3" fill="#bfeee0" opacity=".8"/><rect x="44.6" y="38.3" width="6.6" height="2.9" fill="#4f5fd6"/><rect x="45.6" y="39.2" width="4.6" height="1.1" fill="#eef0ff"/><rect x="51.9" y="38.3" width="6.6" height="2.9" fill="#4f5fd6"/><rect x="52.9" y="39.2" width="4.6" height="1.1" fill="#eef0ff"/><rect x="59.1" y="38.3" width="6.6" height="2.9" fill="#4f5fd6"/><rect x="60.1" y="39.2" width="4.6" height="1.1" fill="#eef0ff"/><rect x="66.3" y="38.3" width="6.6" height="2.9" fill="#4f5fd6"/><rect x="67.3" y="39.2" width="4.6" height="1.1" fill="#eef0ff"/><rect x="38" y="38.9" width="5" height="1.3" fill="#bfeee0" opacity=".8"/><rect x="44.6" y="41.7" width="6.6" height="2.9" fill="#4f5fd6"/><rect x="45.6" y="42.6" width="4.6" height="1.1" fill="#eef0ff"/><rect x="51.9" y="41.7" width="6.6" height="2.9" fill="#4f5fd6"/><rect x="52.9" y="42.6" width="4.6" height="1.1" fill="#eef0ff"/><rect x="59.1" y="41.7" width="6.6" height="2.9" fill="#4f5fd6"/><rect x="60.1" y="42.6" width="4.6" height="1.1" fill="#eef0ff"/><rect x="66.3" y="41.7" width="6.6" height="2.9" fill="#4f5fd6"/><rect x="67.3" y="42.6" width="4.6" height="1.1" fill="#eef0ff"/><rect x="38" y="42.3" width="5" height="1.3" fill="#bfeee0" opacity=".8"/><path d="M37.5,45.5 H73" stroke="#7fffd4" stroke-width=".7"/><path d="M37.3,7 V55" stroke="#7fffd4" stroke-width=".5" opacity=".7"/></svg>
<svg class="abs" style="left:47.3px;top:416px" width="74" height="55.5" viewBox="0 0 74 55.5"><rect width="74" height="55.5" fill="#2c8e86"/><rect x="12" y="0.8" width="34" height="3.6" fill="#9ad86a" opacity=".75"/><rect x="2" y="6.4" width="68" height="2.2" fill="#78c7a0" opacity=".6"/><rect x="1.5" y="9" width="69" height="40" fill="#0c0c1c"/><rect x="1.5" y="12.3" width="69" height="0.6" fill="#a0a6bc"/><rect x="1.5" y="15.7" width="69" height="0.6" fill="#a0a6bc"/><rect x="1.5" y="19.0" width="69" height="0.6" fill="#a0a6bc"/><rect x="1.5" y="22.4" width="69" height="0.6" fill="#a0a6bc"/><rect x="1.5" y="25.7" width="69" height="0.6" fill="#a0a6bc"/><rect x="1.5" y="29.1" width="69" height="0.6" fill="#a0a6bc"/><rect x="1.5" y="32.4" width="69" height="0.6" fill="#a0a6bc"/><rect x="1.5" y="35.8" width="69" height="0.6" fill="#a0a6bc"/><rect x="1.5" y="39.1" width="69" height="0.6" fill="#a0a6bc"/><rect x="1.5" y="42.5" width="69" height="0.6" fill="#a0a6bc"/><rect x="1.5" y="45.8" width="69" height="0.6" fill="#a0a6bc"/><rect x="16" y="10.3" width="22" height="1.2" fill="#c9c060"/><path d="M15.5,9 V49 M59,9 V49" stroke="#7f88ac" stroke-width=".7"/><path d="M71.5,8 V50 H2" stroke="#fff" stroke-width="1.6" fill="none"/><rect x="0" y="51.6" width="74" height="3.9" fill="#3a7fc0"/><rect x="1" y="52.2" width="16" height="2.4" fill="#2a2fb0"/><rect x="19" y="52.2" width="14" height="2.4" fill="#8fd0e8" opacity=".8"/><rect x="35" y="52.2" width="10" height="2.4" fill="#2a2fb0"/><rect x="50" y="52.2" width="22" height="2.4" fill="#7fd8b0" opacity=".8"/></svg>
<div class="abs" style="left:47.3px;top:490px;width:74px;height:55.5px;background:#e6e6fa;border-left:1px solid #000;border-top:1px solid #000"></div>
<svg class="abs" style="left:47px;top:582.5px" width="21" height="20" viewBox="0 0 21 20"><rect x="0" y="1" width="20.5" height="3" fill="#9a9a9a"/><rect x="0" y="4.5" width="20.5" height="15" fill="#111"/><rect x="1" y="6.0" width="2.6" height="2" fill="#e8e8e8"/><rect x="5" y="6.0" width="2.6" height="2" fill="#e8e8e8"/><rect x="9" y="6.0" width="2.6" height="2" fill="#e8e8e8"/><rect x="13" y="6.0" width="2.6" height="2" fill="#e8e8e8"/><rect x="17" y="6.0" width="2.6" height="2" fill="#e8e8e8"/><rect x="1" y="9.4" width="2.6" height="2" fill="#e8e8e8"/><rect x="5" y="9.4" width="2.6" height="2" fill="#e8e8e8"/><rect x="9" y="9.4" width="2.6" height="2" fill="#e8e8e8"/><rect x="13" y="9.4" width="2.6" height="2" fill="#e8e8e8"/><rect x="17" y="9.4" width="2.6" height="2" fill="#e8e8e8"/><rect x="1" y="12.8" width="2.6" height="2" fill="#e8e8e8"/><rect x="5" y="12.8" width="2.6" height="2" fill="#e8e8e8"/><rect x="9" y="12.8" width="2.6" height="2" fill="#e8e8e8"/><rect x="13" y="12.8" width="2.6" height="2" fill="#e8e8e8"/><rect x="17" y="12.8" width="2.6" height="2" fill="#e8e8e8"/><rect x="1" y="16.2" width="2.6" height="2" fill="#e8e8e8"/><rect x="5" y="16.2" width="2.6" height="2" fill="#e8e8e8"/><rect x="9" y="16.2" width="2.6" height="2" fill="#e8e8e8"/><rect x="13" y="16.2" width="2.6" height="2" fill="#e8e8e8"/><rect x="17" y="16.2" width="2.6" height="2" fill="#e8e8e8"/><rect x="13" y="16.2" width="6.5" height="2" fill="#e8934a"/></svg>
<svg class="abs" style="left:47px;top:656.5px" width="21" height="19" viewBox="0 0 21 19"><rect x="0" y="0.5" width="20.5" height="18" fill="#0d0d12"/><rect x="1" y="1.5" width="18" height="1.2" fill="#888"/><rect x="0" y="5.5" width="20.5" height="1" fill="#9a9a9a"/><rect x="14.0" y="9" width="1.4" height="1.4" fill="#6f9fe0"/><rect x="16.4" y="9" width="1.4" height="1.4" fill="#6f9fe0"/><rect x="14.0" y="12" width="1.4" height="1.4" fill="#6f9fe0"/><rect x="16.4" y="12" width="1.4" height="1.4" fill="#6f9fe0"/><rect x="14.0" y="15" width="1.4" height="1.4" fill="#6f9fe0"/><rect x="16.4" y="15" width="1.4" height="1.4" fill="#6f9fe0"/></svg>
<svg class="abs" style="left:47px;top:734.5px" width="15" height="12" viewBox="0 0 15 12"><rect width="14.5" height="11.5" fill="#d8c0a8"/><rect x="0" y="1.0" width="14.5" height="1" fill="#8a6f5a"/><rect x="0" y="3.2" width="14.5" height="1" fill="#8a6f5a"/><rect x="0" y="5.4" width="14.5" height="1" fill="#8a6f5a"/><rect x="0" y="7.6" width="14.5" height="1" fill="#8a6f5a"/><rect x="0" y="9.8" width="14.5" height="1" fill="#8a6f5a"/></svg>
<svg class="abs" style="left:47px;top:805.5px" width="23" height="16" viewBox="0 0 23 16"><rect width="22.5" height="15.5" fill="#b04a3c"/><rect width="22.5" height="2.5" fill="#e8b8a8"/><rect x="0" y="5" width="22.5" height="0.9" fill="#e8c8b8"/><rect x="0" y="8" width="22.5" height="0.9" fill="#e8c8b8"/><rect x="0" y="11" width="22.5" height="0.9" fill="#e8c8b8"/><rect x="6" y="2.5" width="0.8" height="13" fill="#e8c8b8"/><rect x="0" y="0" width="22.5" height="15.5" fill="none" stroke="#c89888" stroke-width=".8"/></svg>
<svg class="abs" style="left:47px;top:880px" width="12" height="17" viewBox="0 0 12 17"><rect x="0.5" y="1" width="11" height="0.8" fill="#9ab"/><rect x="0.5" y="3" width="11" height="0.8" fill="#9ab"/><rect x="0.5" y="5.5" width="5" height="3.2" fill="#3f6aa8"/><rect x="6.3" y="5.5" width="5" height="3.2" fill="#3f6aa8"/><rect x="0.5" y="9.5" width="5" height="3.2" fill="#3f6aa8"/><rect x="6.3" y="9.5" width="5" height="3.2" fill="#3f6aa8"/><rect x="0.5" y="13.5" width="5" height="3.2" fill="#3f6aa8"/><rect x="6.3" y="13.5" width="5" height="3.2" fill="#3f6aa8"/></svg>
<span class="t serif" style="left:12.6px;top:193.8px;font-size:14.3px;color:#111">0041</span>
<span class="t serif" style="left:47.5px;top:249.6px;font-size:14.3px;color:#111">窗口_41</span>
<span class="t serif" style="left:12.6px;top:267.8px;font-size:14.3px;color:#111">0042</span>
<span class="t serif" style="left:47.5px;top:323.6px;font-size:14.3px;color:#111">窗口_42</span>
<span class="t serif" style="left:12.6px;top:341.8px;font-size:14.3px;color:#fff">0043</span>
<span class="t serif" style="left:47.5px;top:397.6px;font-size:14.3px;color:#fff">窗口_43</span>
<span class="t serif" style="left:12.6px;top:415.8px;font-size:14.3px;color:#111">0044</span>
<span class="t serif" style="left:47.5px;top:471.6px;font-size:14.3px;color:#111">窗口_44</span>
<span class="t serif" style="left:12.6px;top:489.8px;font-size:14.3px;color:#111">0045</span>
<span class="t serif" style="left:47.5px;top:545.6px;font-size:14.3px;color:#111">窗口_45</span>
<span class="t serif" style="left:12.6px;top:563.8px;font-size:14.3px;color:#111">0050</span>
<span class="t serif" style="left:47.5px;top:619.6px;font-size:14.3px;color:#111">窗口_50</span>
<span class="t serif" style="left:12.6px;top:637.8px;font-size:14.3px;color:#111">0051</span>
<span class="t serif" style="left:47.5px;top:693.6px;font-size:14.3px;color:#111">窗口_51</span>
<span class="t serif" style="left:12.6px;top:711.8px;font-size:14.3px;color:#111">0052</span>
<span class="t serif" style="left:47.5px;top:767.6px;font-size:14.3px;color:#111">窗口_52</span>
<span class="t serif" style="left:12.6px;top:785.8px;font-size:14.3px;color:#111">0053</span>
<span class="t serif" style="left:47.5px;top:841.6px;font-size:14.3px;color:#111">窗口_53</span>
<span class="t serif" style="left:12.6px;top:859.8px;font-size:14.3px;color:#111">0054</span>
<div class="abs" style="left:5px;top:897px;width:212.5px;height:27px;background:#edf1f9"></div>
<div class="abs" style="left:5.5px;top:896.5px;width:211.5px;height:1px;background:#aab7c6"></div>
<div class="abs" style="left:110.5px;top:897px;width:71.5px;height:26px;background:#fff"></div>
<div class="abs" style="left:52px;top:898px;width:1px;height:24px;background:#d9dde6"></div>
<span class="t" style="left:15px;top:904px;font-size:14.3px;color:#7a7a7a">地址</span>
<span class="t" style="left:60px;top:904px;font-size:14.3px;color:#7a7a7a">目录树</span>
<span class="t" style="left:117.5px;top:904px;font-size:14.3px;color:#111">窗口预览</span>
<div class="abs" style="left:1128px;top:872.5px;width:250px;height:32px;background:#fff;border-radius:3px;box-shadow:0 0 1.5px rgba(255,255,255,.8)"></div>
<svg class="abs" style="left:1090px;top:860px" width="300" height="60" viewBox="1090 860 300 60" font-family="Liberation Sans, Noto Sans CJK SC, sans-serif"><g transform="rotate(-13 1115.5 886.5)"><rect x="1099" y="870.5" width="33.5" height="32.5" rx="4" fill="#f2561d"/><path d="M1125.5,879.5 C1121,875.5 1108,875.5 1107,881.5 C1106,888 1125,885 1124.5,891.5 C1124,897.5 1111,898 1105.5,893.5" fill="none" stroke="#fff" stroke-width="4.6" stroke-linecap="round"/></g><text x="1142.3" y="896.3" font-size="18.5" font-weight="bold" fill="#1565d8">中</text><circle cx="1178" cy="884.8" r="2" fill="none" stroke="#1565d8" stroke-width="1.5"/><path d="M1186.5,889.5 a2,2 0 1 1 2.2,2 c0,2 -1,3.4 -3,4.2 c1.3,-1.2 1.6,-2.6 0.8,-4.2z" fill="#1565d8"/><rect x="1207.8" y="880.3" width="7.2" height="11.4" rx="3.6" fill="#1565d8"/><path d="M1204.6,888 a6.8,6.8 0 0 0 13.6,0" fill="none" stroke="#1565d8" stroke-width="1.6"/><path d="M1211.4,894.8 V898.6 M1208,898.6 h6.8" stroke="#1565d8" stroke-width="1.6"/><rect x="1233.6" y="883" width="17" height="13.2" rx="1.6" fill="#fff" stroke="#1565d8" stroke-width="1.7"/><path d="M1236.5,886.6 h11.5 M1236.5,889.6 h11.5" stroke="#1565d8" stroke-width="1.5" stroke-dasharray="2 1.1"/><path d="M1238,893 h8.2" stroke="#1565d8" stroke-width="1.6"/><defs><linearGradient id="ts" x1="0" y1="0" x2="0" y2="1"><stop offset="0" stop-color="#f0604a"/><stop offset=".55" stop-color="#b86ee8"/><stop offset="1" stop-color="#6f8ef5"/></linearGradient></defs><path d="M1262.4,884.5 L1267.5,880.6 C1269.5,883 1273.5,883 1275.5,880.6 L1280.8,884.5 L1278.3,888.6 L1276.5,887.6 V897.8 H1266.6 V887.6 L1264.8,888.6 Z" fill="url(#ts)"/><circle cx="1280.6" cy="878.8" r="3.4" fill="#f0503c"/><path d="M1295.5,883 h13 a5,5 0 0 1 4,5 l0.8,7 a2.2,2.2 0 0 1 -4,1.4 l-1.8,-2.6 h-11 l-1.8,2.6 a2.2,2.2 0 0 1 -4,-1.4 l0.8,-7 a5,5 0 0 1 4,-5z" fill="#1565d8"/><path d="M1296.5,888.4 h4 M1298.5,886.4 v4" stroke="#fff" stroke-width="1.3"/><circle cx="1305.2" cy="888.4" r="1.1" fill="#fff"/><circle cx="1308.4" cy="888.4" r="1.1" fill="#fff"/><rect x="1324.3" y="882" width="6.8" height="6.8" rx="1.6" fill="#1565d8"/><circle cx="1336.6" cy="885.4" r="3.4" fill="#1565d8"/><rect x="1324.3" y="891" width="6.8" height="6.8" rx="1.6" fill="#1565d8"/><rect x="1333.2" y="891" width="6.8" height="6.8" rx="1.6" fill="#1565d8"/><path d="M1362.4,880.2 L1365.4,884.5 L1370.4,884.8 L1368.4,889.5 L1370.4,894.2 L1365.4,894.5 L1362.4,898.8 L1359.4,894.5 L1354.4,894.2 L1356.4,889.5 L1354.4,884.8 L1359.4,884.5Z" fill="#1565d8"/><circle cx="1362.4" cy="888.6" r="2.6" fill="#fff"/><path d="M1362.4,890 V896.5" stroke="#fff" stroke-width="1.6"/></svg>
<div class="abs" style="left:222px;top:933px;width:1248px;height:5px;background:#f0f0f0"></div>
<div class="abs" style="left:631px;top:933px;width:632px;height:5px;background:#cdcdcd"></div>
</body></html>
